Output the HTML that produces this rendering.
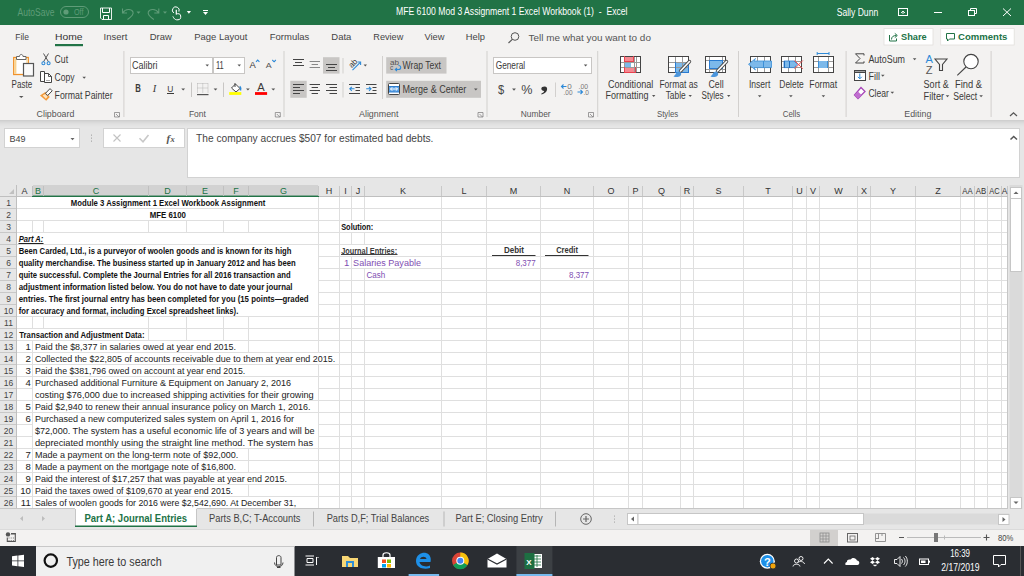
<!DOCTYPE html>
<html><head><meta charset="utf-8"><title>Excel</title>
<style>html,body{margin:0;padding:0;width:1024px;height:576px;overflow:hidden;background:#fff;font-family:"Liberation Sans",sans-serif}svg{display:block}</style>
</head><body><svg width="1024" height="576" viewBox="0 0 1024 576" font-family="Liberation Sans, sans-serif"><rect x="0" y="0" width="1024" height="25" fill="#217346" />
<text x="17.5" y="16" font-size="10" fill="#5f9c78" textLength="37" lengthAdjust="spacingAndGlyphs" >AutoSave</text>
<rect x="60.5" y="6.5" width="28" height="11" fill="none" stroke="#5f9c78" stroke-width="1" rx="5.5" />
<circle cx="66" cy="12" r="2.6" fill="#5f9c78"/>
<text x="74" y="15.2" font-size="8.5" fill="#5f9c78" textLength="9.5" lengthAdjust="spacingAndGlyphs" >Off</text>
<path d="M100.5 8 H111.5 V19.5 H102 L100.5 18 Z" fill="none" stroke="#e8f0ea" stroke-width="1" />
<path d="M102.5 8 V12.5 H109.5 V8" fill="none" stroke="#ffffff" stroke-width="1" />
<path d="M103.5 19.5 V15.5 H108.5 V19.5" fill="none" stroke="#ffffff" stroke-width="1" />
<path d="M122.5 8.5 V13 H127 M122.8 12.7 C125.5 8.5 131.5 8.5 133 12 C134 14.5 131 17 127.5 19.5" fill="none" stroke="#5f9c78" stroke-width="1.1" />
<path d="M136.5 11.5 H140.5 L138.5 13.8 Z" fill="#5f9c78" />
<path d="M158.8 8.5 V13 H154.3 M158.5 12.7 C155.8 8.5 149.8 8.5 148.3 12 C147.3 14.5 150.3 17 153.8 19.5" fill="none" stroke="#5f9c78" stroke-width="1.1" />
<path d="M163 11.5 H167 L165 13.8 Z" fill="#5f9c78" />
<path d="M173.8 13 A3.4 3.4 0 1 1 178.9 11.6" fill="none" stroke="#fff" stroke-width="1" />
<path d="M176.3 9.8 V14.6" fill="none" stroke="#fff" stroke-width="1.2" />
<path d="M176.3 14 C178 13.3 180.7 13.6 180.7 16 V17.5 C180.7 19.5 178.5 20 176.5 19.8 C175 19.6 174 18.5 173.4 17.4 L172.9 16.4" fill="none" stroke="#fff" stroke-width="1" />
<path d="M186.8 11 H191 L188.9 13.7 Z" fill="#fff" />
<rect x="203" y="10" width="5" height="1" fill="#fff"/>
<path d="M203 12 H208 L205.5 15 Z" fill="#fff" />
<text x="396" y="15" font-size="10" fill="#ffffff" textLength="231.5" lengthAdjust="spacingAndGlyphs" >MFE 6100 Mod 3 Assignment 1 Excel Workbook (1)  -  Excel</text>
<text x="836.7" y="16" font-size="10" fill="#ffffff" textLength="41.5" lengthAdjust="spacingAndGlyphs" >Sally Dunn</text>
<rect x="898.5" y="8.5" width="9" height="7" fill="none" stroke="#fff" stroke-width="1" />
<path d="M901 13 L903 11 L905 13 M903 11 V14" fill="none" stroke="#fff" stroke-width="0.9" />
<rect x="934" y="12" width="8" height="1" fill="#fff"/>
<rect x="968.5" y="10.5" width="6" height="5" fill="none" stroke="#fff" stroke-width="1" />
<path d="M970.5 10.5 V8.5 H976.5 V13.5 H974.5" fill="none" stroke="#fff" stroke-width="1" />
<path d="M1003 8.5 L1011 16 M1011 8.5 L1003 16" fill="none" stroke="#fff" stroke-width="1" />
<rect x="0" y="25" width="1024" height="95" fill="#f3f2f1" />
<text x="15.3" y="40.2" font-size="9.8" fill="#444444" textLength="13.7" lengthAdjust="spacingAndGlyphs" >File</text>
<text x="55" y="40.2" font-size="9.8" fill="#333333" textLength="27.5" lengthAdjust="spacingAndGlyphs" >Home</text>
<text x="103.5" y="40.2" font-size="9.8" fill="#444444" textLength="23.8" lengthAdjust="spacingAndGlyphs" >Insert</text>
<text x="149.8" y="40.2" font-size="9.8" fill="#444444" textLength="22" lengthAdjust="spacingAndGlyphs" >Draw</text>
<text x="194.3" y="40.2" font-size="9.8" fill="#444444" textLength="53" lengthAdjust="spacingAndGlyphs" >Page Layout</text>
<text x="269.8" y="40.2" font-size="9.8" fill="#444444" textLength="39.5" lengthAdjust="spacingAndGlyphs" >Formulas</text>
<text x="331.3" y="40.2" font-size="9.8" fill="#444444" textLength="20" lengthAdjust="spacingAndGlyphs" >Data</text>
<text x="373.3" y="40.2" font-size="9.8" fill="#444444" textLength="30" lengthAdjust="spacingAndGlyphs" >Review</text>
<text x="424.5" y="40.2" font-size="9.8" fill="#444444" textLength="20" lengthAdjust="spacingAndGlyphs" >View</text>
<text x="465.8" y="40.2" font-size="9.8" fill="#444444" textLength="19.2" lengthAdjust="spacingAndGlyphs" >Help</text>
<rect x="55" y="44" width="28" height="2.2" fill="#217346" />
<circle cx="515" cy="36.5" r="3.8" fill="none" stroke="#555" stroke-width="1"/>
<path d="M512.3 39.3 L508.5 43" fill="none" stroke="#555" stroke-width="1.1" />
<text x="528.6" y="40.5" font-size="9.5" fill="#555555" textLength="122.3" lengthAdjust="spacingAndGlyphs" >Tell me what you want to do</text>
<rect x="884" y="28.6" width="49" height="16.4" fill="#ffffff" stroke="#e1dfdd" stroke-width="0.8" />
<rect x="940.7" y="28.6" width="73.5" height="16.4" fill="#ffffff" stroke="#e1dfdd" stroke-width="0.8" />
<path d="M889.5 35 V41 H896.5 V38.5" fill="none" stroke="#217346" stroke-width="1" />
<path d="M891.5 39.5 C891.5 36.8 893.3 35.5 896.3 35.5 M894.8 33.4 L897.3 35.5 L894.8 37.6" fill="none" stroke="#217346" stroke-width="1" />
<text x="901" y="39.9" font-size="9.8" fill="#217346" font-weight="bold" textLength="25.6" lengthAdjust="spacingAndGlyphs" >Share</text>
<path d="M946.5 33.5 H954.5 V39 H949.5 L947.5 41 V39 H946.5 Z" fill="none" stroke="#217346" stroke-width="1" />
<text x="958.1" y="39.9" font-size="9.8" fill="#217346" font-weight="bold" textLength="49.3" lengthAdjust="spacingAndGlyphs" >Comments</text>
<rect x="123.4" y="51" width="1" height="66" fill="#d2d0ce"/>
<rect x="283.5" y="51" width="1" height="66" fill="#d2d0ce"/>
<rect x="486.5" y="51" width="1" height="66" fill="#d2d0ce"/>
<rect x="597.2" y="51" width="1" height="66" fill="#d2d0ce"/>
<rect x="738" y="51" width="1" height="66" fill="#d2d0ce"/>
<rect x="845.6" y="51" width="1" height="66" fill="#d2d0ce"/>
<rect x="990.6" y="51" width="1" height="66" fill="#d2d0ce"/>
<text x="11.6" y="88" font-size="10" fill="#3b3a39" textLength="20.5" lengthAdjust="spacingAndGlyphs" >Paste</text>
<path d="M19 96 H23.5 L21.25 98 Z" fill="#555" />
<text x="54.6" y="63" font-size="10" fill="#3b3a39" textLength="13.5" lengthAdjust="spacingAndGlyphs" >Cut</text>
<text x="54.6" y="81" font-size="10" fill="#3b3a39" textLength="20" lengthAdjust="spacingAndGlyphs" >Copy</text>
<path d="M82.4 76.8 H86 L84.2 78.8 Z" fill="#555" />
<text x="54.6" y="99" font-size="10" fill="#3b3a39" textLength="58" lengthAdjust="spacingAndGlyphs" >Format Painter</text>
<text x="36.6" y="116.5" font-size="9.3" fill="#555" textLength="37.7" lengthAdjust="spacingAndGlyphs" >Clipboard</text>
<rect x="130.5" y="57.5" width="82" height="16" fill="#ffffff" stroke="#c8c6c4" stroke-width="1" />
<rect x="213.5" y="57.5" width="31" height="16" fill="#ffffff" stroke="#c8c6c4" stroke-width="1" />
<text x="132" y="69" font-size="10" fill="#3b3a39" textLength="25.4" lengthAdjust="spacingAndGlyphs" >Calibri</text>
<path d="M205.5 64.5 H209 L207.25 66.5 Z" fill="#555" />
<text x="216" y="69" font-size="10" fill="#3b3a39" textLength="7.8" lengthAdjust="spacingAndGlyphs" >11</text>
<path d="M237.5 64.5 H241 L239.25 66.5 Z" fill="#555" />
<text x="188.9" y="116.5" font-size="9.3" fill="#555" textLength="17" lengthAdjust="spacingAndGlyphs" >Font</text>
<text x="356" y="116.5" font-size="9.5" fill="#444" ></text>
<text x="359" y="116.5" font-size="9.3" fill="#555" textLength="39.5" lengthAdjust="spacingAndGlyphs" >Alignment</text>
<text x="520.8" y="116.5" font-size="9.3" fill="#555" textLength="29.8" lengthAdjust="spacingAndGlyphs" >Number</text>
<text x="657" y="116.5" font-size="9.3" fill="#555" textLength="21.2" lengthAdjust="spacingAndGlyphs" >Styles</text>
<text x="782.8" y="116.5" font-size="9.3" fill="#555" textLength="17.5" lengthAdjust="spacingAndGlyphs" >Cells</text>
<text x="904.3" y="116.5" font-size="9.3" fill="#555" textLength="27" lengthAdjust="spacingAndGlyphs" >Editing</text>
<rect x="323" y="57.2" width="16.5" height="16.4" fill="#c8c6c4" />
<rect x="290.3" y="80.8" width="16.4" height="17" fill="#c8c6c4" />
<rect x="386.2" y="57.2" width="60.3" height="16.4" fill="#c8c6c4" />
<rect x="386.2" y="80.8" width="94.8" height="17" fill="#c8c6c4" />
<text x="402.6" y="69.2" font-size="10" fill="#3b3a39" textLength="38.4" lengthAdjust="spacingAndGlyphs" >Wrap Text</text>
<text x="402.6" y="92.5" font-size="10" fill="#3b3a39" textLength="63.6" lengthAdjust="spacingAndGlyphs" >Merge &amp; Center</text>
<path d="M474 88.5 H477.6 L475.8 90.5 Z" fill="#555" />
<rect x="493.5" y="57.5" width="98" height="16" fill="#ffffff" stroke="#c8c6c4" stroke-width="1" />
<text x="495.7" y="69" font-size="10" fill="#3b3a39" textLength="29.5" lengthAdjust="spacingAndGlyphs" >General</text>
<path d="M583.8 64.5 H587.4 L585.6 66.5 Z" fill="#555" />
<text x="607.9" y="87.8" font-size="10" fill="#3b3a39" textLength="45.4" lengthAdjust="spacingAndGlyphs" >Conditional</text>
<text x="605.5" y="99.4" font-size="10" fill="#3b3a39" textLength="43" lengthAdjust="spacingAndGlyphs" >Formatting</text>
<text x="659.4" y="87.8" font-size="10" fill="#3b3a39" textLength="38.4" lengthAdjust="spacingAndGlyphs" >Format as</text>
<text x="665.7" y="99.4" font-size="10" fill="#3b3a39" textLength="20" lengthAdjust="spacingAndGlyphs" >Table</text>
<text x="708.5" y="87.8" font-size="10" fill="#3b3a39" textLength="15.1" lengthAdjust="spacingAndGlyphs" >Cell</text>
<text x="701.6" y="99.4" font-size="10" fill="#3b3a39" textLength="22" lengthAdjust="spacingAndGlyphs" >Styles</text>
<path d="M652 95 H655.4 L653.7 97 Z" fill="#555" />
<path d="M688.5 95 H691.9 L690.2 97 Z" fill="#555" />
<path d="M727 95 H730.4 L728.7 97 Z" fill="#555" />
<text x="748.9" y="87.6" font-size="10" fill="#3b3a39" textLength="21.4" lengthAdjust="spacingAndGlyphs" >Insert</text>
<text x="779.3" y="87.6" font-size="10" fill="#3b3a39" textLength="24.4" lengthAdjust="spacingAndGlyphs" >Delete</text>
<text x="809.3" y="87.6" font-size="10" fill="#3b3a39" textLength="27.8" lengthAdjust="spacingAndGlyphs" >Format</text>
<path d="M757.9000000000001 95.2 H761.5 L759.7 97.2 Z" fill="#555" />
<path d="M789.1 95.2 H792.6999999999999 L790.9 97.2 Z" fill="#555" />
<path d="M821.6 95.2 H825.1999999999999 L823.4 97.2 Z" fill="#555" />
<text x="868.4" y="62.9" font-size="10" fill="#3b3a39" textLength="36.6" lengthAdjust="spacingAndGlyphs" >AutoSum</text>
<path d="M912.8 58.2 H916.4 L914.6 60.2 Z" fill="#555" />
<text x="868.4" y="80.2" font-size="10" fill="#3b3a39" textLength="11.5" lengthAdjust="spacingAndGlyphs" >Fill</text>
<path d="M881 74.8 H884.6 L882.8 76.8 Z" fill="#555" />
<text x="868.4" y="97.2" font-size="10" fill="#3b3a39" textLength="20.5" lengthAdjust="spacingAndGlyphs" >Clear</text>
<path d="M890.5 91.8 H894.1 L892.3 93.8 Z" fill="#555" />
<text x="923.6" y="88.2" font-size="10" fill="#3b3a39" textLength="25.1" lengthAdjust="spacingAndGlyphs" >Sort &amp;</text>
<text x="923.6" y="99.8" font-size="10" fill="#3b3a39" textLength="20.5" lengthAdjust="spacingAndGlyphs" >Filter</text>
<path d="M945.7 95.2 H949.3 L947.5 97.2 Z" fill="#555" />
<text x="955" y="88.2" font-size="10" fill="#3b3a39" textLength="27" lengthAdjust="spacingAndGlyphs" >Find &amp;</text>
<text x="953.2" y="99.8" font-size="10" fill="#3b3a39" textLength="24" lengthAdjust="spacingAndGlyphs" >Select</text>
<path d="M979.3 95.2 H982.9 L981.1 97.2 Z" fill="#555" />
<path d="M1010 116 L1013.5 112.7 L1017 116" fill="none" stroke="#555" stroke-width="1.2" />
<path d="M114.5 112.5 H119.5 V117 M114.5 112.5 V117 H119.5 M116.0 114 L119.0 117" fill="none" stroke="#777" stroke-width="0.7" />
<path d="M275.3 112.5 H280.3 V117 M275.3 112.5 V117 H280.3 M276.8 114 L279.8 117" fill="none" stroke="#777" stroke-width="0.7" />
<path d="M478 112.5 H483 V117 M478 112.5 V117 H483 M479.5 114 L482.5 117" fill="none" stroke="#777" stroke-width="0.7" />
<path d="M588.5 112.5 H593.5 V117 M588.5 112.5 V117 H593.5 M590.0 114 L593.0 117" fill="none" stroke="#777" stroke-width="0.7" />
<rect x="13.7" y="57.5" width="14.6" height="17" fill="#ffffff" stroke="#f0912a" stroke-width="1.3" />
<rect x="14.4" y="58.2" width="2" height="15.6" fill="#f9d38e" />
<rect x="26.2" y="58.2" width="1.4" height="5" fill="#f9e0ae" />
<path d="M16.5 59.5 V56.5 H19.5 C19.5 53.8 23 53.8 23 56.5 H26 V59.5 Z" fill="#ffffff" stroke="#666" stroke-width="1" />
<rect x="23.5" y="63.5" width="10" height="12.5" fill="#fafafa" stroke="#555" stroke-width="1.2" />
<path d="M43.5 53.5 L48.5 61.8 M48.5 53.5 L43.5 61.8" fill="none" stroke="#555" stroke-width="1" />
<circle cx="43.4" cy="63.3" r="1.5" fill="none" stroke="#2e8ad8" stroke-width="1.1"/>
<circle cx="48.6" cy="63.3" r="1.5" fill="none" stroke="#2e8ad8" stroke-width="1.1"/>
<rect x="40.5" y="71.5" width="4" height="10" fill="#ffffff" />
<path d="M44.5 81.5 H40.5 V71.5 H44.5" fill="none" stroke="#444" stroke-width="1" />
<path d="M44.5 71.5 V82.5 H51.5 V76.5 L48.5 73.5 H44.5" fill="#ffffff" stroke="#444" stroke-width="1" />
<path d="M48.5 73.5 V76.5 H51.5" fill="none" stroke="#444" stroke-width="0.9" />
<rect x="46" y="80" width="4" height="1" fill="#aaa"/>
<path d="M40 95.5 L45.3 92 L49.8 97 L46.2 100.8 Z" fill="#f39a3a" />
<path d="M42.6 95.6 L45.2 93.9 L47.7 96.8 L45.8 98.7 Z" fill="#fde3c0" />
<path d="M45.5 93.3 L50 88.6 L52.2 90.8 L47.7 95.5 Z" fill="#ffffff" stroke="#444" stroke-width="1" />
<text x="249.6" y="67.7" font-size="9" fill="#3b3a39" textLength="6.3" lengthAdjust="spacingAndGlyphs" >A</text>
<path d="M256 61.8 L257.7 60 L259.4 61.8" fill="none" stroke="#2e8ad8" stroke-width="1.1" />
<text x="265.8" y="67.7" font-size="8" fill="#555" textLength="5.9" lengthAdjust="spacingAndGlyphs" >A</text>
<path d="M272.3 60 L274.1 61.8 L275.8 60" fill="none" stroke="#2e8ad8" stroke-width="1.1" />
<text x="135.3" y="92.1" font-size="10" fill="#3b3a39" font-weight="bold" textLength="5.6" lengthAdjust="spacingAndGlyphs" >B</text>
<text x="152.8" y="92.1" font-size="9.5" fill="#3b3a39" font-family="Liberation Serif" font-style="italic" textLength="3.5" lengthAdjust="spacingAndGlyphs" >I</text>
<text x="167.3" y="91.6" font-size="9.5" fill="#3b3a39" textLength="6.1" lengthAdjust="spacingAndGlyphs" >U</text>
<rect x="167" y="93" width="7" height="1" fill="#3b3a39"/>
<path d="M181.3 88.5 H185.1 L183.2 90.6 Z" fill="#555" />
<rect x="191" y="82.5" width="1" height="14.5" fill="#c8c6c4"/>
<path d="M197.5 83.5 H208 M197.5 83.5 V92.5 M208 83.5 V92.5 M202.75 83.5 V92.5 M197.5 88 H208" fill="none" stroke="#aaa" stroke-width="0.8" stroke-dasharray="1 1"/>
<rect x="197" y="94" width="11.5" height="1.2" fill="#555"/>
<path d="M213.6 88.5 H217.4 L215.5 90.6 Z" fill="#555" />
<rect x="223" y="82.5" width="1" height="14.5" fill="#c8c6c4"/>
<path d="M231.5 88 L235.5 84 L240 88.5 L236 92 Z" fill="#ffffff" stroke="#444" stroke-width="1" />
<path d="M235 83 V87" fill="none" stroke="#444" stroke-width="1" />
<path d="M239.8 86.3 C241 87.5 241 89 240.5 90.5" fill="none" stroke="#2e8ad8" stroke-width="1.4" />
<rect x="229.2" y="92.1" width="12.1" height="2.8" fill="#ffff00" />
<path d="M246 88.5 H249.8 L247.9 90.6 Z" fill="#555" />
<text x="257.3" y="90.9" font-size="10" fill="#3b3a39" textLength="7.4" lengthAdjust="spacingAndGlyphs" >A</text>
<rect x="255" y="92.1" width="12.1" height="2.8" fill="#ff0000" />
<path d="M271.4 88.5 H275.2 L273.3 90.6 Z" fill="#555" />
<rect x="293" y="59" width="11" height="1" fill="#444"/>
<rect x="295" y="62" width="7" height="1" fill="#444"/>
<rect x="293" y="65" width="11" height="1" fill="#444"/>
<rect x="309.6" y="61" width="10.399999999999977" height="1" fill="#888"/>
<rect x="311.6" y="64" width="6.399999999999977" height="1" fill="#888"/>
<rect x="309.6" y="67" width="10.399999999999977" height="1" fill="#888"/>
<rect x="326" y="64" width="11" height="1" fill="#444"/>
<rect x="328" y="67" width="7" height="1" fill="#444"/>
<rect x="326" y="70" width="11" height="1" fill="#444"/>
<rect x="342.5" y="58" width="1" height="15.5" fill="#d2d0ce"/>
<text x="348" y="66.5" font-size="8" fill="#333" transform="rotate(-45 352 63)">ab</text>
<path d="M352.5 70.2 L360.3 62.3" fill="none" stroke="#2e8ad8" stroke-width="1.1" />
<path d="M357.5 62 H360.6 V65" fill="none" stroke="#2e8ad8" stroke-width="1.1" />
<path d="M363.6 64.6 H367 L365.3 66.6 Z" fill="#555" />
<rect x="382" y="56" width="1" height="43" fill="#d2d0ce"/>
<rect x="293" y="84" width="11" height="1" fill="#444"/>
<rect x="293" y="87" width="7" height="1" fill="#444"/>
<rect x="293" y="90" width="11" height="1" fill="#444"/>
<rect x="293" y="93" width="7" height="1" fill="#444"/>
<rect x="309.6" y="84" width="10.399999999999977" height="1" fill="#444"/>
<rect x="311.6" y="87" width="6.399999999999977" height="1" fill="#444"/>
<rect x="309.6" y="90" width="10.399999999999977" height="1" fill="#444"/>
<rect x="311.6" y="93" width="6.399999999999977" height="1" fill="#444"/>
<rect x="326" y="84" width="11" height="1" fill="#444"/>
<rect x="329.5" y="87" width="7.5" height="1" fill="#444"/>
<rect x="326" y="90" width="11" height="1" fill="#444"/>
<rect x="329.5" y="93" width="7.5" height="1" fill="#444"/>
<rect x="342.5" y="82" width="1" height="15.5" fill="#d2d0ce"/>
<rect x="349" y="84" width="11" height="1" fill="#444"/>
<rect x="355.5" y="87" width="4.5" height="1" fill="#444"/>
<rect x="355.5" y="90" width="4.5" height="1" fill="#444"/>
<rect x="349" y="93" width="11" height="1" fill="#444"/>
<path d="M354.5 88.8 H349.8 M351.8 86.8 L349.8 88.8 L351.8 90.8" fill="none" stroke="#2e8ad8" stroke-width="1.1" />
<rect x="366" y="84" width="10.5" height="1" fill="#444"/>
<rect x="372.5" y="87" width="4.0" height="1" fill="#444"/>
<rect x="372.5" y="90" width="4.0" height="1" fill="#444"/>
<rect x="366" y="93" width="10.5" height="1" fill="#444"/>
<path d="M366.2 88.8 H371 M369 86.8 L371 88.8 L369 90.8" fill="none" stroke="#2e8ad8" stroke-width="1.1" />
<text x="390" y="64.7" font-size="6.5" fill="#555" textLength="9" lengthAdjust="spacingAndGlyphs" >ab</text>
<text x="390" y="70.2" font-size="6.5" fill="#555" >c</text>
<path d="M398.5 65.5 C401.5 65.5 401.5 69.5 398.5 69.5 H395.5 M397 68 L395.3 69.5 L397 71" fill="none" stroke="#2e8ad8" stroke-width="1.1" />
<rect x="388.5" y="83.5" width="11" height="11" fill="#ffffff" stroke="#444" stroke-width="1" rx="1" />
<rect x="389" y="86" width="10" height="6" fill="#5aa0e4" />
<rect x="389" y="86" width="10" height="1" fill="#2f7fd0"/>
<rect x="389" y="91.5" width="10" height="1" fill="#2f7fd0"/>
<path d="M390.5 89 H397.5 M392.2 87.3 L390.5 89 L392.2 90.7 M395.8 87.3 L397.5 89 L395.8 90.7" fill="none" stroke="#ffffff" stroke-width="1" />
<text x="497.9" y="93.8" font-size="13" fill="#444" textLength="6.2" lengthAdjust="spacingAndGlyphs" >$</text>
<path d="M512.1 88.6 H515.9 L514 90.7 Z" fill="#555" />
<text x="521.2" y="94.2" font-size="13" fill="#444" textLength="11.2" lengthAdjust="spacingAndGlyphs" >%</text>
<path d="M544.5 86.5 C546.8 86.5 547.5 88.3 547 90 C546.5 92 544.5 93.5 541.5 94.5 L541.2 93.7 C543 93 544 92 544.2 91 C542.5 91 541.3 90 541.3 88.8 C541.3 87.3 542.8 86.5 544.5 86.5 Z" fill="#333" />
<rect x="555" y="82.5" width="1" height="14.5" fill="#d2d0ce"/>
<path d="M566.5 86.5 H561.5 M563.5 84.5 L561.5 86.5 L563.5 88.5" fill="none" stroke="#2e8ad8" stroke-width="1.1" />
<text x="567.3" y="89.3" font-size="7.5" fill="#777" textLength="4.5" lengthAdjust="spacingAndGlyphs" >0</text>
<text x="563.5" y="94.8" font-size="7.5" fill="#777" textLength="9" lengthAdjust="spacingAndGlyphs" >.00</text>
<text x="578.5" y="89.3" font-size="7.5" fill="#777" textLength="9.5" lengthAdjust="spacingAndGlyphs" >.00</text>
<path d="M577.5 92 H582.5 M580.5 90 L582.5 92 L580.5 94" fill="none" stroke="#2e8ad8" stroke-width="1.1" />
<text x="583.5" y="94.8" font-size="7.5" fill="#777" textLength="5.5" lengthAdjust="spacingAndGlyphs" >.0</text>
<rect x="620" y="56" width="21" height="17" fill="#ffffff" />
<rect x="624" y="56" width="10" height="6" fill="#f58a92" />
<rect x="624" y="67" width="11" height="6" fill="#f58a92" />
<rect x="624" y="62" width="7" height="5" fill="#7db9ea" />
<rect x="624" y="56" width="1" height="17" fill="#9a9a9a"/>
<rect x="634" y="56" width="1" height="17" fill="#9a9a9a"/>
<rect x="636" y="56" width="1" height="17" fill="#9a9a9a"/>
<rect x="620" y="62" width="21" height="1" fill="#9a9a9a"/>
<rect x="620" y="67" width="21" height="1" fill="#9a9a9a"/>
<rect x="620.5" y="56.5" width="20" height="16" fill="none" stroke="#444" stroke-width="1" />
<rect x="624" y="56" width="1" height="6" fill="#e8424f"/>
<rect x="633" y="56" width="1" height="6" fill="#e8424f"/>
<rect x="624" y="61" width="10" height="1" fill="#e8424f"/>
<rect x="624" y="67" width="1" height="6" fill="#e8424f"/>
<rect x="635" y="67" width="1" height="6" fill="#e8424f"/>
<rect x="624" y="72" width="12" height="1" fill="#e8424f"/>
<rect x="668" y="56" width="21" height="17" fill="#ffffff" />
<rect x="675" y="62" width="14" height="11" fill="#7db9ea" />
<rect x="675" y="56" width="1" height="17" fill="#9a9a9a"/>
<rect x="682" y="56" width="1" height="17" fill="#9a9a9a"/>
<rect x="668" y="62" width="21" height="1" fill="#9a9a9a"/>
<rect x="668" y="67" width="21" height="1" fill="#9a9a9a"/>
<rect x="668.5" y="56.5" width="20" height="16" fill="none" stroke="#444" stroke-width="1" />
<rect x="675" y="62" width="1" height="11" fill="#2a7bd0"/>
<rect x="675" y="72" width="14" height="1" fill="#2a7bd0"/>
<rect x="688" y="62" width="1" height="11" fill="#2a7bd0"/>
<path d="M689.5 61.5 L680.5 71" fill="none" stroke="#505050" stroke-width="3.4" stroke-linecap="round"/>
<path d="M689.5 61.5 L680.5 71" fill="none" stroke="#ffffff" stroke-width="1.6" stroke-linecap="round"/>
<path d="M679.5 71.5 C676.5 71.0 676.0 74.5 673.5 76.5 C677.5 78.0 682.0 76.5 681.0 73.0 Z" fill="#4c96dc" />
<rect x="705" y="56" width="21" height="17" fill="#ffffff" />
<rect x="709" y="56" width="1" height="17" fill="#9a9a9a"/>
<rect x="722" y="56" width="1" height="17" fill="#9a9a9a"/>
<rect x="705" y="60" width="21" height="1" fill="#9a9a9a"/>
<rect x="705" y="69" width="21" height="1" fill="#9a9a9a"/>
<rect x="705.5" y="56.5" width="20" height="16" fill="none" stroke="#444" stroke-width="1" />
<rect x="709.5" y="60.5" width="13" height="8" fill="#7db9ea" stroke="#2a7bd0" stroke-width="1" />
<path d="M726.5 61.5 L717.5 71" fill="none" stroke="#505050" stroke-width="3.4" stroke-linecap="round"/>
<path d="M726.5 61.5 L717.5 71" fill="none" stroke="#ffffff" stroke-width="1.6" stroke-linecap="round"/>
<path d="M716.5 71.5 C713.5 71.0 713.0 74.5 710.5 76.5 C714.5 78.0 719.0 76.5 718.0 73.0 Z" fill="#4c96dc" />
<rect x="750" y="56" width="21" height="17" fill="#ffffff" />
<rect x="757" y="56" width="1" height="17" fill="#9a9a9a"/>
<rect x="764" y="56" width="1" height="17" fill="#9a9a9a"/>
<rect x="750" y="61" width="21" height="1" fill="#9a9a9a"/>
<rect x="750" y="67" width="21" height="1" fill="#9a9a9a"/>
<rect x="750.5" y="56.5" width="20" height="16" fill="none" stroke="#444" stroke-width="1" />
<path d="M771.5 61 H754 L755.5 58.5 L748.5 64.3 L755.5 70 L754 67.6 H771.5 Z" fill="#7db9ea" stroke="#3b8fd8" stroke-width="0.8" />
<rect x="763" y="61" width="1" height="7" fill="#3b8fd8"/>
<rect x="781" y="56" width="21" height="17" fill="#ffffff" />
<rect x="788" y="56" width="1" height="17" fill="#9a9a9a"/>
<rect x="795" y="56" width="1" height="17" fill="#9a9a9a"/>
<rect x="781" y="61" width="21" height="1" fill="#9a9a9a"/>
<rect x="781" y="67" width="21" height="1" fill="#9a9a9a"/>
<rect x="781.5" y="56.5" width="20" height="16" fill="none" stroke="#444" stroke-width="1" />
<path d="M784 61 H794 L797.5 64.3 L794 67.6 H784 Z" fill="#7db9ea" stroke="#2f7fd0" stroke-width="0.8" />
<rect x="784" y="61" width="1" height="7" fill="#1f6fc0"/>
<rect x="789" y="61" width="1" height="7" fill="#1f6fc0"/>
<path d="M794.5 60.5 L802.8 68.8 M802.8 60.5 L794.5 68.8" fill="none" stroke="#f05050" stroke-width="1" />
<rect x="813" y="56" width="21" height="17" fill="#ffffff" />
<rect x="818" y="56" width="1" height="17" fill="#9a9a9a"/>
<rect x="828" y="56" width="1" height="17" fill="#9a9a9a"/>
<rect x="813" y="61" width="21" height="1" fill="#9a9a9a"/>
<rect x="813" y="67" width="21" height="1" fill="#9a9a9a"/>
<rect x="813.5" y="56.5" width="20" height="16" fill="none" stroke="#444" stroke-width="1" />
<rect x="818" y="61" width="10" height="7" fill="#7db9ea" />
<rect x="818" y="61" width="1" height="7" fill="#3b8fd8"/>
<rect x="827" y="61" width="1" height="7" fill="#3b8fd8"/>
<path d="M817.2 53.5 H829 M817.2 52 V55 M829 52 V55" fill="none" stroke="#2e8ad8" stroke-width="1" />
<path d="M864 55.5 V53.8 H855.5 L860 58.5 L855.5 63 H864 V61.3" fill="none" stroke="#444" stroke-width="1" />
<rect x="854.5" y="70.5" width="11" height="10" fill="#ffffff" stroke="#444" stroke-width="1" />
<rect x="854.5" y="71.5" width="11.0" height="1.5" fill="#444"/>
<path d="M859.8 73.5 V78.8 M857.8 76.8 L859.8 78.8 L861.8 76.8" fill="none" stroke="#2e8ad8" stroke-width="1" />
<path d="M861 87.5 L865 91.5 L858 98.5 L854.5 95 Z" fill="#ffffff" stroke="#a646b8" stroke-width="1.3" />
<path d="M854.5 95 L858 98.5 L861.5 95 L858 91.5 Z" fill="#c06fd0" />
<text x="925.6" y="62.8" font-size="11" fill="#2e8ad8" textLength="7.4" lengthAdjust="spacingAndGlyphs" >A</text>
<text x="925.8" y="74" font-size="11.5" fill="#555" textLength="6.8" lengthAdjust="spacingAndGlyphs" >Z</text>
<path d="M935 59 H947 L942.5 64.5 V70.5 H939.5 V64.5 Z" fill="none" stroke="#444" stroke-width="1.1" />
<circle cx="971" cy="61.6" r="7.2" fill="#ffffff" stroke="#444" stroke-width="1.1"/>
<path d="M957.3 75.3 L966 67" fill="none" stroke="#444" stroke-width="1.1" />
<rect x="0" y="120" width="1024" height="65" fill="#e6e6e6" />
<rect x="0" y="120" width="1024" height="1" fill="#cfcfcf"/>
<rect x="0" y="121" width="1024" height="1" fill="#d5d5d5"/>
<rect x="0" y="122" width="1024" height="1" fill="#dadada"/>
<rect x="0" y="123" width="1024" height="1" fill="#dedede"/>
<rect x="0" y="124" width="1024" height="1" fill="#e1e1e1"/>
<rect x="0" y="125" width="1024" height="1" fill="#e3e3e3"/>
<rect x="0" y="126" width="1024" height="1" fill="#e5e5e5"/>
<rect x="4.5" y="128.5" width="75" height="19" fill="#ffffff" stroke="#d2d2d2" stroke-width="1" />
<text x="9.4" y="142" font-size="9.5" fill="#444" textLength="16" lengthAdjust="spacingAndGlyphs" >B49</text>
<path d="M70.5 138 H74.5 L72.5 140.3 Z" fill="#666" />
<rect x="91" y="134.5" width="1" height="1.3" fill="#aaa" />
<rect x="91" y="137.5" width="1" height="1.3" fill="#aaa" />
<rect x="91" y="140.5" width="1" height="1.3" fill="#aaa" />
<rect x="103.5" y="128.5" width="81" height="19" fill="#ffffff" stroke="#d2d2d2" stroke-width="1" />
<path d="M113.5 134.5 L120.5 141.5 M120.5 134.5 L113.5 141.5" fill="none" stroke="#c2c2c2" stroke-width="1.1" />
<path d="M139.5 138.3 L143 141.8 L148.5 135" fill="none" stroke="#c8c8c8" stroke-width="1.6" />
<text x="166.5" y="142" font-size="11" fill="#555" font-family="Liberation Serif" font-weight="bold" font-style="italic" >f</text>
<text x="170.5" y="142.3" font-size="8.5" fill="#555" font-family="Liberation Serif" font-weight="bold" font-style="italic" >x</text>
<rect x="187.5" y="128.5" width="832" height="49" fill="#ffffff" stroke="#d2d2d2" stroke-width="1" />
<text x="196.1" y="142.3" font-size="10.5" fill="#444" textLength="237.3" lengthAdjust="spacingAndGlyphs" >The company accrues $507 for estimated bad debts.</text>
<path d="M1010.5 139.5 L1013.7 136.5 L1017 139.5" fill="none" stroke="#555" stroke-width="1.5" />
<rect x="0" y="185" width="1024" height="324" fill="#ffffff" />
<rect x="0" y="185" width="1008" height="11" fill="#e6e6e6" />
<rect x="33" y="185" width="285" height="11" fill="#d2d2d2" />
<rect x="0" y="196" width="1008" height="1" fill="#bfbfbf"/>
<rect x="32" y="196" width="287" height="1" fill="#217346"/>
<rect x="32" y="195" width="287" height="1" fill="#217346" opacity="0.45"/>
<rect x="0" y="197" width="16" height="312" fill="#e6e6e6" />
<rect x="16" y="185" width="1" height="324" fill="#bfbfbf"/>
<path d="M14 189 V194 H9 Z" fill="#c0c0c0" />
<rect x="32" y="186" width="1" height="10" fill="#c0c0c0"/>
<rect x="43" y="186" width="1" height="10" fill="#c0c0c0"/>
<rect x="148" y="186" width="1" height="10" fill="#c0c0c0"/>
<rect x="186" y="186" width="1" height="10" fill="#c0c0c0"/>
<rect x="223" y="186" width="1" height="10" fill="#c0c0c0"/>
<rect x="248" y="186" width="1" height="10" fill="#c0c0c0"/>
<rect x="318" y="186" width="1" height="10" fill="#c8c8c8"/>
<rect x="339" y="186" width="1" height="10" fill="#c8c8c8"/>
<rect x="351" y="186" width="1" height="10" fill="#c8c8c8"/>
<rect x="364" y="186" width="1" height="10" fill="#c8c8c8"/>
<rect x="441" y="186" width="1" height="10" fill="#c8c8c8"/>
<rect x="486" y="186" width="1" height="10" fill="#c8c8c8"/>
<rect x="540" y="186" width="1" height="10" fill="#c8c8c8"/>
<rect x="593" y="186" width="1" height="10" fill="#c8c8c8"/>
<rect x="628" y="186" width="1" height="10" fill="#c8c8c8"/>
<rect x="642" y="186" width="1" height="10" fill="#c8c8c8"/>
<rect x="680" y="186" width="1" height="10" fill="#c8c8c8"/>
<rect x="693" y="186" width="1" height="10" fill="#c8c8c8"/>
<rect x="743" y="186" width="1" height="10" fill="#c8c8c8"/>
<rect x="792" y="186" width="1" height="10" fill="#c8c8c8"/>
<rect x="806" y="186" width="1" height="10" fill="#c8c8c8"/>
<rect x="819" y="186" width="1" height="10" fill="#c8c8c8"/>
<rect x="857" y="186" width="1" height="10" fill="#c8c8c8"/>
<rect x="870" y="186" width="1" height="10" fill="#c8c8c8"/>
<rect x="915" y="186" width="1" height="10" fill="#c8c8c8"/>
<rect x="960" y="186" width="1" height="10" fill="#c8c8c8"/>
<rect x="974" y="186" width="1" height="10" fill="#c8c8c8"/>
<rect x="987" y="186" width="1" height="10" fill="#c0c0c0"/>
<rect x="1001" y="186" width="1" height="10" fill="#c8c8c8"/>
<rect x="1007" y="186" width="1" height="10" fill="#c8c8c8"/>
<text x="24.5" y="193.7" font-size="9" fill="#333" text-anchor="middle" >A</text>
<text x="38.0" y="193.7" font-size="9" fill="#217346" text-anchor="middle" >B</text>
<text x="96.0" y="193.7" font-size="9" fill="#217346" text-anchor="middle" >C</text>
<text x="167.5" y="193.7" font-size="9" fill="#217346" text-anchor="middle" >D</text>
<text x="205.0" y="193.7" font-size="9" fill="#217346" text-anchor="middle" >E</text>
<text x="236.0" y="193.7" font-size="9" fill="#217346" text-anchor="middle" >F</text>
<text x="283.5" y="193.7" font-size="9" fill="#217346" text-anchor="middle" >G</text>
<text x="329.0" y="193.7" font-size="9" fill="#333" text-anchor="middle" >H</text>
<text x="345.5" y="193.7" font-size="9" fill="#333" text-anchor="middle" >I</text>
<text x="358.0" y="193.7" font-size="9" fill="#333" text-anchor="middle" >J</text>
<text x="403.0" y="193.7" font-size="9" fill="#333" text-anchor="middle" >K</text>
<text x="464.0" y="193.7" font-size="9" fill="#333" text-anchor="middle" >L</text>
<text x="513.5" y="193.7" font-size="9" fill="#333" text-anchor="middle" >M</text>
<text x="567.0" y="193.7" font-size="9" fill="#333" text-anchor="middle" >N</text>
<text x="611.0" y="193.7" font-size="9" fill="#333" text-anchor="middle" >O</text>
<text x="635.5" y="193.7" font-size="9" fill="#333" text-anchor="middle" >P</text>
<text x="661.5" y="193.7" font-size="9" fill="#333" text-anchor="middle" >Q</text>
<text x="687.0" y="193.7" font-size="9" fill="#333" text-anchor="middle" >R</text>
<text x="718.5" y="193.7" font-size="9" fill="#333" text-anchor="middle" >S</text>
<text x="768.0" y="193.7" font-size="9" fill="#333" text-anchor="middle" >T</text>
<text x="799.5" y="193.7" font-size="9" fill="#333" text-anchor="middle" >U</text>
<text x="813.0" y="193.7" font-size="9" fill="#333" text-anchor="middle" >V</text>
<text x="838.5" y="193.7" font-size="9" fill="#333" text-anchor="middle" >W</text>
<text x="864.0" y="193.7" font-size="9" fill="#333" text-anchor="middle" >X</text>
<text x="893.0" y="193.7" font-size="9" fill="#333" text-anchor="middle" >Y</text>
<text x="938.0" y="193.7" font-size="9" fill="#333" text-anchor="middle" >Z</text>
<text x="967.5" y="193.7" font-size="9" fill="#333" text-anchor="middle" textLength="10.4" lengthAdjust="spacingAndGlyphs" >AA</text>
<text x="981.0" y="193.7" font-size="9" fill="#333" text-anchor="middle" textLength="10.4" lengthAdjust="spacingAndGlyphs" >AB</text>
<text x="994.5" y="193.7" font-size="9" fill="#333" text-anchor="middle" textLength="10.4" lengthAdjust="spacingAndGlyphs" >AC</text>
<text x="1001.7" y="193.7" font-size="9" fill="#333" textLength="5.6" lengthAdjust="spacingAndGlyphs" >A</text>
<text x="8.5" y="206" font-size="8.5" fill="#444" text-anchor="middle" >1</text>
<rect x="0" y="208" width="16" height="1" fill="#c8c8c8"/>
<text x="8.5" y="218" font-size="8.5" fill="#444" text-anchor="middle" >2</text>
<rect x="0" y="220" width="16" height="1" fill="#c8c8c8"/>
<text x="8.5" y="230" font-size="8.5" fill="#444" text-anchor="middle" >3</text>
<rect x="0" y="232" width="16" height="1" fill="#c8c8c8"/>
<text x="8.5" y="242" font-size="8.5" fill="#444" text-anchor="middle" >4</text>
<rect x="0" y="244" width="16" height="1" fill="#c8c8c8"/>
<text x="8.5" y="254" font-size="8.5" fill="#444" text-anchor="middle" >5</text>
<rect x="0" y="256" width="16" height="1" fill="#c8c8c8"/>
<text x="8.5" y="266" font-size="8.5" fill="#444" text-anchor="middle" >6</text>
<rect x="0" y="268" width="16" height="1" fill="#c8c8c8"/>
<text x="8.5" y="278" font-size="8.5" fill="#444" text-anchor="middle" >7</text>
<rect x="0" y="280" width="16" height="1" fill="#c8c8c8"/>
<text x="8.5" y="290" font-size="8.5" fill="#444" text-anchor="middle" >8</text>
<rect x="0" y="292" width="16" height="1" fill="#c8c8c8"/>
<text x="8.5" y="302" font-size="8.5" fill="#444" text-anchor="middle" >9</text>
<rect x="0" y="304" width="16" height="1" fill="#c8c8c8"/>
<text x="8.5" y="314" font-size="8.5" fill="#444" text-anchor="middle" >10</text>
<rect x="0" y="316" width="16" height="1" fill="#c8c8c8"/>
<text x="8.5" y="326" font-size="8.5" fill="#444" text-anchor="middle" >11</text>
<rect x="0" y="328" width="16" height="1" fill="#c8c8c8"/>
<text x="8.5" y="338" font-size="8.5" fill="#444" text-anchor="middle" >12</text>
<rect x="0" y="340" width="16" height="1" fill="#c8c8c8"/>
<text x="8.5" y="350" font-size="8.5" fill="#444" text-anchor="middle" >13</text>
<rect x="0" y="352" width="16" height="1" fill="#c8c8c8"/>
<text x="8.5" y="362" font-size="8.5" fill="#444" text-anchor="middle" >14</text>
<rect x="0" y="364" width="16" height="1" fill="#c8c8c8"/>
<text x="8.5" y="374" font-size="8.5" fill="#444" text-anchor="middle" >15</text>
<rect x="0" y="376" width="16" height="1" fill="#c8c8c8"/>
<text x="8.5" y="386" font-size="8.5" fill="#444" text-anchor="middle" >16</text>
<rect x="0" y="388" width="16" height="1" fill="#c8c8c8"/>
<text x="8.5" y="398" font-size="8.5" fill="#444" text-anchor="middle" >17</text>
<rect x="0" y="400" width="16" height="1" fill="#c8c8c8"/>
<text x="8.5" y="410" font-size="8.5" fill="#444" text-anchor="middle" >18</text>
<rect x="0" y="412" width="16" height="1" fill="#c8c8c8"/>
<text x="8.5" y="422" font-size="8.5" fill="#444" text-anchor="middle" >19</text>
<rect x="0" y="424" width="16" height="1" fill="#c8c8c8"/>
<text x="8.5" y="434" font-size="8.5" fill="#444" text-anchor="middle" >20</text>
<rect x="0" y="436" width="16" height="1" fill="#c8c8c8"/>
<text x="8.5" y="446" font-size="8.5" fill="#444" text-anchor="middle" >21</text>
<rect x="0" y="448" width="16" height="1" fill="#c8c8c8"/>
<text x="8.5" y="458" font-size="8.5" fill="#444" text-anchor="middle" >22</text>
<rect x="0" y="460" width="16" height="1" fill="#c8c8c8"/>
<text x="8.5" y="470" font-size="8.5" fill="#444" text-anchor="middle" >23</text>
<rect x="0" y="472" width="16" height="1" fill="#c8c8c8"/>
<text x="8.5" y="482" font-size="8.5" fill="#444" text-anchor="middle" >24</text>
<rect x="0" y="484" width="16" height="1" fill="#c8c8c8"/>
<text x="8.5" y="494" font-size="8.5" fill="#444" text-anchor="middle" >25</text>
<rect x="0" y="496" width="16" height="1" fill="#c8c8c8"/>
<text x="8.5" y="506" font-size="8.5" fill="#444" text-anchor="middle" >26</text>
<rect x="0" y="508" width="16" height="1" fill="#c8c8c8"/>
<rect x="17" y="208" width="991" height="1" fill="#dfdfdf"/>
<rect x="17" y="220" width="991" height="1" fill="#dfdfdf"/>
<rect x="17" y="232" width="991" height="1" fill="#dfdfdf"/>
<rect x="17" y="244" width="991" height="1" fill="#dfdfdf"/>
<rect x="17" y="256" width="15" height="1" fill="#dfdfdf"/>
<rect x="318" y="256" width="690" height="1" fill="#dfdfdf"/>
<rect x="17" y="268" width="15" height="1" fill="#dfdfdf"/>
<rect x="318" y="268" width="690" height="1" fill="#dfdfdf"/>
<rect x="17" y="280" width="15" height="1" fill="#dfdfdf"/>
<rect x="318" y="280" width="690" height="1" fill="#dfdfdf"/>
<rect x="17" y="292" width="15" height="1" fill="#dfdfdf"/>
<rect x="318" y="292" width="690" height="1" fill="#dfdfdf"/>
<rect x="17" y="304" width="15" height="1" fill="#dfdfdf"/>
<rect x="318" y="304" width="690" height="1" fill="#dfdfdf"/>
<rect x="17" y="316" width="991" height="1" fill="#dfdfdf"/>
<rect x="17" y="328" width="991" height="1" fill="#dfdfdf"/>
<rect x="17" y="340" width="991" height="1" fill="#dfdfdf"/>
<rect x="17" y="352" width="991" height="1" fill="#dfdfdf"/>
<rect x="17" y="364" width="991" height="1" fill="#dfdfdf"/>
<rect x="17" y="376" width="991" height="1" fill="#dfdfdf"/>
<rect x="17" y="388" width="15" height="1" fill="#dfdfdf"/>
<rect x="318" y="388" width="690" height="1" fill="#dfdfdf"/>
<rect x="17" y="400" width="991" height="1" fill="#dfdfdf"/>
<rect x="17" y="412" width="991" height="1" fill="#dfdfdf"/>
<rect x="17" y="424" width="15" height="1" fill="#dfdfdf"/>
<rect x="318" y="424" width="690" height="1" fill="#dfdfdf"/>
<rect x="17" y="436" width="15" height="1" fill="#dfdfdf"/>
<rect x="318" y="436" width="690" height="1" fill="#dfdfdf"/>
<rect x="17" y="448" width="991" height="1" fill="#dfdfdf"/>
<rect x="17" y="460" width="991" height="1" fill="#dfdfdf"/>
<rect x="17" y="472" width="991" height="1" fill="#dfdfdf"/>
<rect x="17" y="484" width="991" height="1" fill="#dfdfdf"/>
<rect x="17" y="496" width="991" height="1" fill="#dfdfdf"/>
<rect x="17" y="508" width="991" height="1" fill="#dfdfdf"/>
<rect x="17" y="256" width="16" height="1" fill="#ffffff"/>
<rect x="17" y="268" width="16" height="1" fill="#ffffff"/>
<rect x="17" y="280" width="16" height="1" fill="#ffffff"/>
<rect x="17" y="292" width="16" height="1" fill="#ffffff"/>
<rect x="17" y="304" width="16" height="1" fill="#ffffff"/>
<rect x="318" y="197" width="1" height="12" fill="#dfdfdf"/>
<rect x="339" y="197" width="1" height="12" fill="#dfdfdf"/>
<rect x="351" y="197" width="1" height="12" fill="#dfdfdf"/>
<rect x="364" y="197" width="1" height="12" fill="#dfdfdf"/>
<rect x="441" y="197" width="1" height="12" fill="#dfdfdf"/>
<rect x="486" y="197" width="1" height="12" fill="#dfdfdf"/>
<rect x="540" y="197" width="1" height="12" fill="#dfdfdf"/>
<rect x="593" y="197" width="1" height="12" fill="#dfdfdf"/>
<rect x="628" y="197" width="1" height="12" fill="#dfdfdf"/>
<rect x="642" y="197" width="1" height="12" fill="#dfdfdf"/>
<rect x="680" y="197" width="1" height="12" fill="#dfdfdf"/>
<rect x="693" y="197" width="1" height="12" fill="#dfdfdf"/>
<rect x="743" y="197" width="1" height="12" fill="#dfdfdf"/>
<rect x="792" y="197" width="1" height="12" fill="#dfdfdf"/>
<rect x="806" y="197" width="1" height="12" fill="#dfdfdf"/>
<rect x="819" y="197" width="1" height="12" fill="#dfdfdf"/>
<rect x="857" y="197" width="1" height="12" fill="#dfdfdf"/>
<rect x="870" y="197" width="1" height="12" fill="#dfdfdf"/>
<rect x="915" y="197" width="1" height="12" fill="#dfdfdf"/>
<rect x="960" y="197" width="1" height="12" fill="#dfdfdf"/>
<rect x="974" y="197" width="1" height="12" fill="#dfdfdf"/>
<rect x="987" y="197" width="1" height="12" fill="#dfdfdf"/>
<rect x="1001" y="197" width="1" height="12" fill="#dfdfdf"/>
<rect x="318" y="209" width="1" height="12" fill="#dfdfdf"/>
<rect x="339" y="209" width="1" height="12" fill="#dfdfdf"/>
<rect x="351" y="209" width="1" height="12" fill="#dfdfdf"/>
<rect x="364" y="209" width="1" height="12" fill="#dfdfdf"/>
<rect x="441" y="209" width="1" height="12" fill="#dfdfdf"/>
<rect x="486" y="209" width="1" height="12" fill="#dfdfdf"/>
<rect x="540" y="209" width="1" height="12" fill="#dfdfdf"/>
<rect x="593" y="209" width="1" height="12" fill="#dfdfdf"/>
<rect x="628" y="209" width="1" height="12" fill="#dfdfdf"/>
<rect x="642" y="209" width="1" height="12" fill="#dfdfdf"/>
<rect x="680" y="209" width="1" height="12" fill="#dfdfdf"/>
<rect x="693" y="209" width="1" height="12" fill="#dfdfdf"/>
<rect x="743" y="209" width="1" height="12" fill="#dfdfdf"/>
<rect x="792" y="209" width="1" height="12" fill="#dfdfdf"/>
<rect x="806" y="209" width="1" height="12" fill="#dfdfdf"/>
<rect x="819" y="209" width="1" height="12" fill="#dfdfdf"/>
<rect x="857" y="209" width="1" height="12" fill="#dfdfdf"/>
<rect x="870" y="209" width="1" height="12" fill="#dfdfdf"/>
<rect x="915" y="209" width="1" height="12" fill="#dfdfdf"/>
<rect x="960" y="209" width="1" height="12" fill="#dfdfdf"/>
<rect x="974" y="209" width="1" height="12" fill="#dfdfdf"/>
<rect x="987" y="209" width="1" height="12" fill="#dfdfdf"/>
<rect x="1001" y="209" width="1" height="12" fill="#dfdfdf"/>
<rect x="32" y="221" width="1" height="12" fill="#dfdfdf"/>
<rect x="43" y="221" width="1" height="12" fill="#dfdfdf"/>
<rect x="148" y="221" width="1" height="12" fill="#dfdfdf"/>
<rect x="186" y="221" width="1" height="12" fill="#dfdfdf"/>
<rect x="223" y="221" width="1" height="12" fill="#dfdfdf"/>
<rect x="248" y="221" width="1" height="12" fill="#dfdfdf"/>
<rect x="318" y="221" width="1" height="12" fill="#dfdfdf"/>
<rect x="339" y="221" width="1" height="12" fill="#dfdfdf"/>
<rect x="441" y="221" width="1" height="12" fill="#dfdfdf"/>
<rect x="486" y="221" width="1" height="12" fill="#dfdfdf"/>
<rect x="540" y="221" width="1" height="12" fill="#dfdfdf"/>
<rect x="593" y="221" width="1" height="12" fill="#dfdfdf"/>
<rect x="628" y="221" width="1" height="12" fill="#dfdfdf"/>
<rect x="642" y="221" width="1" height="12" fill="#dfdfdf"/>
<rect x="680" y="221" width="1" height="12" fill="#dfdfdf"/>
<rect x="693" y="221" width="1" height="12" fill="#dfdfdf"/>
<rect x="743" y="221" width="1" height="12" fill="#dfdfdf"/>
<rect x="792" y="221" width="1" height="12" fill="#dfdfdf"/>
<rect x="806" y="221" width="1" height="12" fill="#dfdfdf"/>
<rect x="819" y="221" width="1" height="12" fill="#dfdfdf"/>
<rect x="857" y="221" width="1" height="12" fill="#dfdfdf"/>
<rect x="870" y="221" width="1" height="12" fill="#dfdfdf"/>
<rect x="915" y="221" width="1" height="12" fill="#dfdfdf"/>
<rect x="960" y="221" width="1" height="12" fill="#dfdfdf"/>
<rect x="974" y="221" width="1" height="12" fill="#dfdfdf"/>
<rect x="987" y="221" width="1" height="12" fill="#dfdfdf"/>
<rect x="1001" y="221" width="1" height="12" fill="#dfdfdf"/>
<rect x="318" y="233" width="1" height="12" fill="#dfdfdf"/>
<rect x="339" y="233" width="1" height="12" fill="#dfdfdf"/>
<rect x="351" y="233" width="1" height="12" fill="#dfdfdf"/>
<rect x="364" y="233" width="1" height="12" fill="#dfdfdf"/>
<rect x="441" y="233" width="1" height="12" fill="#dfdfdf"/>
<rect x="486" y="233" width="1" height="12" fill="#dfdfdf"/>
<rect x="540" y="233" width="1" height="12" fill="#dfdfdf"/>
<rect x="593" y="233" width="1" height="12" fill="#dfdfdf"/>
<rect x="628" y="233" width="1" height="12" fill="#dfdfdf"/>
<rect x="642" y="233" width="1" height="12" fill="#dfdfdf"/>
<rect x="680" y="233" width="1" height="12" fill="#dfdfdf"/>
<rect x="693" y="233" width="1" height="12" fill="#dfdfdf"/>
<rect x="743" y="233" width="1" height="12" fill="#dfdfdf"/>
<rect x="792" y="233" width="1" height="12" fill="#dfdfdf"/>
<rect x="806" y="233" width="1" height="12" fill="#dfdfdf"/>
<rect x="819" y="233" width="1" height="12" fill="#dfdfdf"/>
<rect x="857" y="233" width="1" height="12" fill="#dfdfdf"/>
<rect x="870" y="233" width="1" height="12" fill="#dfdfdf"/>
<rect x="915" y="233" width="1" height="12" fill="#dfdfdf"/>
<rect x="960" y="233" width="1" height="12" fill="#dfdfdf"/>
<rect x="974" y="233" width="1" height="12" fill="#dfdfdf"/>
<rect x="987" y="233" width="1" height="12" fill="#dfdfdf"/>
<rect x="1001" y="233" width="1" height="12" fill="#dfdfdf"/>
<rect x="318" y="245" width="1" height="12" fill="#dfdfdf"/>
<rect x="339" y="245" width="1" height="12" fill="#dfdfdf"/>
<rect x="441" y="245" width="1" height="12" fill="#dfdfdf"/>
<rect x="486" y="245" width="1" height="12" fill="#dfdfdf"/>
<rect x="540" y="245" width="1" height="12" fill="#dfdfdf"/>
<rect x="593" y="245" width="1" height="12" fill="#dfdfdf"/>
<rect x="628" y="245" width="1" height="12" fill="#dfdfdf"/>
<rect x="642" y="245" width="1" height="12" fill="#dfdfdf"/>
<rect x="680" y="245" width="1" height="12" fill="#dfdfdf"/>
<rect x="693" y="245" width="1" height="12" fill="#dfdfdf"/>
<rect x="743" y="245" width="1" height="12" fill="#dfdfdf"/>
<rect x="792" y="245" width="1" height="12" fill="#dfdfdf"/>
<rect x="806" y="245" width="1" height="12" fill="#dfdfdf"/>
<rect x="819" y="245" width="1" height="12" fill="#dfdfdf"/>
<rect x="857" y="245" width="1" height="12" fill="#dfdfdf"/>
<rect x="870" y="245" width="1" height="12" fill="#dfdfdf"/>
<rect x="915" y="245" width="1" height="12" fill="#dfdfdf"/>
<rect x="960" y="245" width="1" height="12" fill="#dfdfdf"/>
<rect x="974" y="245" width="1" height="12" fill="#dfdfdf"/>
<rect x="987" y="245" width="1" height="12" fill="#dfdfdf"/>
<rect x="1001" y="245" width="1" height="12" fill="#dfdfdf"/>
<rect x="318" y="257" width="1" height="12" fill="#dfdfdf"/>
<rect x="339" y="257" width="1" height="12" fill="#dfdfdf"/>
<rect x="351" y="257" width="1" height="12" fill="#dfdfdf"/>
<rect x="441" y="257" width="1" height="12" fill="#dfdfdf"/>
<rect x="486" y="257" width="1" height="12" fill="#dfdfdf"/>
<rect x="540" y="257" width="1" height="12" fill="#dfdfdf"/>
<rect x="593" y="257" width="1" height="12" fill="#dfdfdf"/>
<rect x="628" y="257" width="1" height="12" fill="#dfdfdf"/>
<rect x="642" y="257" width="1" height="12" fill="#dfdfdf"/>
<rect x="680" y="257" width="1" height="12" fill="#dfdfdf"/>
<rect x="693" y="257" width="1" height="12" fill="#dfdfdf"/>
<rect x="743" y="257" width="1" height="12" fill="#dfdfdf"/>
<rect x="792" y="257" width="1" height="12" fill="#dfdfdf"/>
<rect x="806" y="257" width="1" height="12" fill="#dfdfdf"/>
<rect x="819" y="257" width="1" height="12" fill="#dfdfdf"/>
<rect x="857" y="257" width="1" height="12" fill="#dfdfdf"/>
<rect x="870" y="257" width="1" height="12" fill="#dfdfdf"/>
<rect x="915" y="257" width="1" height="12" fill="#dfdfdf"/>
<rect x="960" y="257" width="1" height="12" fill="#dfdfdf"/>
<rect x="974" y="257" width="1" height="12" fill="#dfdfdf"/>
<rect x="987" y="257" width="1" height="12" fill="#dfdfdf"/>
<rect x="1001" y="257" width="1" height="12" fill="#dfdfdf"/>
<rect x="318" y="269" width="1" height="12" fill="#dfdfdf"/>
<rect x="339" y="269" width="1" height="12" fill="#dfdfdf"/>
<rect x="351" y="269" width="1" height="12" fill="#dfdfdf"/>
<rect x="364" y="269" width="1" height="12" fill="#dfdfdf"/>
<rect x="441" y="269" width="1" height="12" fill="#dfdfdf"/>
<rect x="486" y="269" width="1" height="12" fill="#dfdfdf"/>
<rect x="540" y="269" width="1" height="12" fill="#dfdfdf"/>
<rect x="593" y="269" width="1" height="12" fill="#dfdfdf"/>
<rect x="628" y="269" width="1" height="12" fill="#dfdfdf"/>
<rect x="642" y="269" width="1" height="12" fill="#dfdfdf"/>
<rect x="680" y="269" width="1" height="12" fill="#dfdfdf"/>
<rect x="693" y="269" width="1" height="12" fill="#dfdfdf"/>
<rect x="743" y="269" width="1" height="12" fill="#dfdfdf"/>
<rect x="792" y="269" width="1" height="12" fill="#dfdfdf"/>
<rect x="806" y="269" width="1" height="12" fill="#dfdfdf"/>
<rect x="819" y="269" width="1" height="12" fill="#dfdfdf"/>
<rect x="857" y="269" width="1" height="12" fill="#dfdfdf"/>
<rect x="870" y="269" width="1" height="12" fill="#dfdfdf"/>
<rect x="915" y="269" width="1" height="12" fill="#dfdfdf"/>
<rect x="960" y="269" width="1" height="12" fill="#dfdfdf"/>
<rect x="974" y="269" width="1" height="12" fill="#dfdfdf"/>
<rect x="987" y="269" width="1" height="12" fill="#dfdfdf"/>
<rect x="1001" y="269" width="1" height="12" fill="#dfdfdf"/>
<rect x="318" y="281" width="1" height="12" fill="#dfdfdf"/>
<rect x="339" y="281" width="1" height="12" fill="#dfdfdf"/>
<rect x="351" y="281" width="1" height="12" fill="#dfdfdf"/>
<rect x="364" y="281" width="1" height="12" fill="#dfdfdf"/>
<rect x="441" y="281" width="1" height="12" fill="#dfdfdf"/>
<rect x="486" y="281" width="1" height="12" fill="#dfdfdf"/>
<rect x="540" y="281" width="1" height="12" fill="#dfdfdf"/>
<rect x="593" y="281" width="1" height="12" fill="#dfdfdf"/>
<rect x="628" y="281" width="1" height="12" fill="#dfdfdf"/>
<rect x="642" y="281" width="1" height="12" fill="#dfdfdf"/>
<rect x="680" y="281" width="1" height="12" fill="#dfdfdf"/>
<rect x="693" y="281" width="1" height="12" fill="#dfdfdf"/>
<rect x="743" y="281" width="1" height="12" fill="#dfdfdf"/>
<rect x="792" y="281" width="1" height="12" fill="#dfdfdf"/>
<rect x="806" y="281" width="1" height="12" fill="#dfdfdf"/>
<rect x="819" y="281" width="1" height="12" fill="#dfdfdf"/>
<rect x="857" y="281" width="1" height="12" fill="#dfdfdf"/>
<rect x="870" y="281" width="1" height="12" fill="#dfdfdf"/>
<rect x="915" y="281" width="1" height="12" fill="#dfdfdf"/>
<rect x="960" y="281" width="1" height="12" fill="#dfdfdf"/>
<rect x="974" y="281" width="1" height="12" fill="#dfdfdf"/>
<rect x="987" y="281" width="1" height="12" fill="#dfdfdf"/>
<rect x="1001" y="281" width="1" height="12" fill="#dfdfdf"/>
<rect x="318" y="293" width="1" height="12" fill="#dfdfdf"/>
<rect x="339" y="293" width="1" height="12" fill="#dfdfdf"/>
<rect x="351" y="293" width="1" height="12" fill="#dfdfdf"/>
<rect x="364" y="293" width="1" height="12" fill="#dfdfdf"/>
<rect x="441" y="293" width="1" height="12" fill="#dfdfdf"/>
<rect x="486" y="293" width="1" height="12" fill="#dfdfdf"/>
<rect x="540" y="293" width="1" height="12" fill="#dfdfdf"/>
<rect x="593" y="293" width="1" height="12" fill="#dfdfdf"/>
<rect x="628" y="293" width="1" height="12" fill="#dfdfdf"/>
<rect x="642" y="293" width="1" height="12" fill="#dfdfdf"/>
<rect x="680" y="293" width="1" height="12" fill="#dfdfdf"/>
<rect x="693" y="293" width="1" height="12" fill="#dfdfdf"/>
<rect x="743" y="293" width="1" height="12" fill="#dfdfdf"/>
<rect x="792" y="293" width="1" height="12" fill="#dfdfdf"/>
<rect x="806" y="293" width="1" height="12" fill="#dfdfdf"/>
<rect x="819" y="293" width="1" height="12" fill="#dfdfdf"/>
<rect x="857" y="293" width="1" height="12" fill="#dfdfdf"/>
<rect x="870" y="293" width="1" height="12" fill="#dfdfdf"/>
<rect x="915" y="293" width="1" height="12" fill="#dfdfdf"/>
<rect x="960" y="293" width="1" height="12" fill="#dfdfdf"/>
<rect x="974" y="293" width="1" height="12" fill="#dfdfdf"/>
<rect x="987" y="293" width="1" height="12" fill="#dfdfdf"/>
<rect x="1001" y="293" width="1" height="12" fill="#dfdfdf"/>
<rect x="318" y="305" width="1" height="12" fill="#dfdfdf"/>
<rect x="339" y="305" width="1" height="12" fill="#dfdfdf"/>
<rect x="351" y="305" width="1" height="12" fill="#dfdfdf"/>
<rect x="364" y="305" width="1" height="12" fill="#dfdfdf"/>
<rect x="441" y="305" width="1" height="12" fill="#dfdfdf"/>
<rect x="486" y="305" width="1" height="12" fill="#dfdfdf"/>
<rect x="540" y="305" width="1" height="12" fill="#dfdfdf"/>
<rect x="593" y="305" width="1" height="12" fill="#dfdfdf"/>
<rect x="628" y="305" width="1" height="12" fill="#dfdfdf"/>
<rect x="642" y="305" width="1" height="12" fill="#dfdfdf"/>
<rect x="680" y="305" width="1" height="12" fill="#dfdfdf"/>
<rect x="693" y="305" width="1" height="12" fill="#dfdfdf"/>
<rect x="743" y="305" width="1" height="12" fill="#dfdfdf"/>
<rect x="792" y="305" width="1" height="12" fill="#dfdfdf"/>
<rect x="806" y="305" width="1" height="12" fill="#dfdfdf"/>
<rect x="819" y="305" width="1" height="12" fill="#dfdfdf"/>
<rect x="857" y="305" width="1" height="12" fill="#dfdfdf"/>
<rect x="870" y="305" width="1" height="12" fill="#dfdfdf"/>
<rect x="915" y="305" width="1" height="12" fill="#dfdfdf"/>
<rect x="960" y="305" width="1" height="12" fill="#dfdfdf"/>
<rect x="974" y="305" width="1" height="12" fill="#dfdfdf"/>
<rect x="987" y="305" width="1" height="12" fill="#dfdfdf"/>
<rect x="1001" y="305" width="1" height="12" fill="#dfdfdf"/>
<rect x="32" y="317" width="1" height="12" fill="#dfdfdf"/>
<rect x="43" y="317" width="1" height="12" fill="#dfdfdf"/>
<rect x="148" y="317" width="1" height="12" fill="#dfdfdf"/>
<rect x="186" y="317" width="1" height="12" fill="#dfdfdf"/>
<rect x="223" y="317" width="1" height="12" fill="#dfdfdf"/>
<rect x="248" y="317" width="1" height="12" fill="#dfdfdf"/>
<rect x="318" y="317" width="1" height="12" fill="#dfdfdf"/>
<rect x="339" y="317" width="1" height="12" fill="#dfdfdf"/>
<rect x="351" y="317" width="1" height="12" fill="#dfdfdf"/>
<rect x="364" y="317" width="1" height="12" fill="#dfdfdf"/>
<rect x="441" y="317" width="1" height="12" fill="#dfdfdf"/>
<rect x="486" y="317" width="1" height="12" fill="#dfdfdf"/>
<rect x="540" y="317" width="1" height="12" fill="#dfdfdf"/>
<rect x="593" y="317" width="1" height="12" fill="#dfdfdf"/>
<rect x="628" y="317" width="1" height="12" fill="#dfdfdf"/>
<rect x="642" y="317" width="1" height="12" fill="#dfdfdf"/>
<rect x="680" y="317" width="1" height="12" fill="#dfdfdf"/>
<rect x="693" y="317" width="1" height="12" fill="#dfdfdf"/>
<rect x="743" y="317" width="1" height="12" fill="#dfdfdf"/>
<rect x="792" y="317" width="1" height="12" fill="#dfdfdf"/>
<rect x="806" y="317" width="1" height="12" fill="#dfdfdf"/>
<rect x="819" y="317" width="1" height="12" fill="#dfdfdf"/>
<rect x="857" y="317" width="1" height="12" fill="#dfdfdf"/>
<rect x="870" y="317" width="1" height="12" fill="#dfdfdf"/>
<rect x="915" y="317" width="1" height="12" fill="#dfdfdf"/>
<rect x="960" y="317" width="1" height="12" fill="#dfdfdf"/>
<rect x="974" y="317" width="1" height="12" fill="#dfdfdf"/>
<rect x="987" y="317" width="1" height="12" fill="#dfdfdf"/>
<rect x="1001" y="317" width="1" height="12" fill="#dfdfdf"/>
<rect x="148" y="329" width="1" height="12" fill="#dfdfdf"/>
<rect x="186" y="329" width="1" height="12" fill="#dfdfdf"/>
<rect x="223" y="329" width="1" height="12" fill="#dfdfdf"/>
<rect x="248" y="329" width="1" height="12" fill="#dfdfdf"/>
<rect x="318" y="329" width="1" height="12" fill="#dfdfdf"/>
<rect x="339" y="329" width="1" height="12" fill="#dfdfdf"/>
<rect x="351" y="329" width="1" height="12" fill="#dfdfdf"/>
<rect x="364" y="329" width="1" height="12" fill="#dfdfdf"/>
<rect x="441" y="329" width="1" height="12" fill="#dfdfdf"/>
<rect x="486" y="329" width="1" height="12" fill="#dfdfdf"/>
<rect x="540" y="329" width="1" height="12" fill="#dfdfdf"/>
<rect x="593" y="329" width="1" height="12" fill="#dfdfdf"/>
<rect x="628" y="329" width="1" height="12" fill="#dfdfdf"/>
<rect x="642" y="329" width="1" height="12" fill="#dfdfdf"/>
<rect x="680" y="329" width="1" height="12" fill="#dfdfdf"/>
<rect x="693" y="329" width="1" height="12" fill="#dfdfdf"/>
<rect x="743" y="329" width="1" height="12" fill="#dfdfdf"/>
<rect x="792" y="329" width="1" height="12" fill="#dfdfdf"/>
<rect x="806" y="329" width="1" height="12" fill="#dfdfdf"/>
<rect x="819" y="329" width="1" height="12" fill="#dfdfdf"/>
<rect x="857" y="329" width="1" height="12" fill="#dfdfdf"/>
<rect x="870" y="329" width="1" height="12" fill="#dfdfdf"/>
<rect x="915" y="329" width="1" height="12" fill="#dfdfdf"/>
<rect x="960" y="329" width="1" height="12" fill="#dfdfdf"/>
<rect x="974" y="329" width="1" height="12" fill="#dfdfdf"/>
<rect x="987" y="329" width="1" height="12" fill="#dfdfdf"/>
<rect x="1001" y="329" width="1" height="12" fill="#dfdfdf"/>
<rect x="32" y="341" width="1" height="12" fill="#dfdfdf"/>
<rect x="248" y="341" width="1" height="12" fill="#dfdfdf"/>
<rect x="318" y="341" width="1" height="12" fill="#dfdfdf"/>
<rect x="339" y="341" width="1" height="12" fill="#dfdfdf"/>
<rect x="351" y="341" width="1" height="12" fill="#dfdfdf"/>
<rect x="364" y="341" width="1" height="12" fill="#dfdfdf"/>
<rect x="441" y="341" width="1" height="12" fill="#dfdfdf"/>
<rect x="486" y="341" width="1" height="12" fill="#dfdfdf"/>
<rect x="540" y="341" width="1" height="12" fill="#dfdfdf"/>
<rect x="593" y="341" width="1" height="12" fill="#dfdfdf"/>
<rect x="628" y="341" width="1" height="12" fill="#dfdfdf"/>
<rect x="642" y="341" width="1" height="12" fill="#dfdfdf"/>
<rect x="680" y="341" width="1" height="12" fill="#dfdfdf"/>
<rect x="693" y="341" width="1" height="12" fill="#dfdfdf"/>
<rect x="743" y="341" width="1" height="12" fill="#dfdfdf"/>
<rect x="792" y="341" width="1" height="12" fill="#dfdfdf"/>
<rect x="806" y="341" width="1" height="12" fill="#dfdfdf"/>
<rect x="819" y="341" width="1" height="12" fill="#dfdfdf"/>
<rect x="857" y="341" width="1" height="12" fill="#dfdfdf"/>
<rect x="870" y="341" width="1" height="12" fill="#dfdfdf"/>
<rect x="915" y="341" width="1" height="12" fill="#dfdfdf"/>
<rect x="960" y="341" width="1" height="12" fill="#dfdfdf"/>
<rect x="974" y="341" width="1" height="12" fill="#dfdfdf"/>
<rect x="987" y="341" width="1" height="12" fill="#dfdfdf"/>
<rect x="1001" y="341" width="1" height="12" fill="#dfdfdf"/>
<rect x="32" y="353" width="1" height="12" fill="#dfdfdf"/>
<rect x="339" y="353" width="1" height="12" fill="#dfdfdf"/>
<rect x="351" y="353" width="1" height="12" fill="#dfdfdf"/>
<rect x="364" y="353" width="1" height="12" fill="#dfdfdf"/>
<rect x="441" y="353" width="1" height="12" fill="#dfdfdf"/>
<rect x="486" y="353" width="1" height="12" fill="#dfdfdf"/>
<rect x="540" y="353" width="1" height="12" fill="#dfdfdf"/>
<rect x="593" y="353" width="1" height="12" fill="#dfdfdf"/>
<rect x="628" y="353" width="1" height="12" fill="#dfdfdf"/>
<rect x="642" y="353" width="1" height="12" fill="#dfdfdf"/>
<rect x="680" y="353" width="1" height="12" fill="#dfdfdf"/>
<rect x="693" y="353" width="1" height="12" fill="#dfdfdf"/>
<rect x="743" y="353" width="1" height="12" fill="#dfdfdf"/>
<rect x="792" y="353" width="1" height="12" fill="#dfdfdf"/>
<rect x="806" y="353" width="1" height="12" fill="#dfdfdf"/>
<rect x="819" y="353" width="1" height="12" fill="#dfdfdf"/>
<rect x="857" y="353" width="1" height="12" fill="#dfdfdf"/>
<rect x="870" y="353" width="1" height="12" fill="#dfdfdf"/>
<rect x="915" y="353" width="1" height="12" fill="#dfdfdf"/>
<rect x="960" y="353" width="1" height="12" fill="#dfdfdf"/>
<rect x="974" y="353" width="1" height="12" fill="#dfdfdf"/>
<rect x="987" y="353" width="1" height="12" fill="#dfdfdf"/>
<rect x="1001" y="353" width="1" height="12" fill="#dfdfdf"/>
<rect x="32" y="365" width="1" height="12" fill="#dfdfdf"/>
<rect x="318" y="365" width="1" height="12" fill="#dfdfdf"/>
<rect x="339" y="365" width="1" height="12" fill="#dfdfdf"/>
<rect x="351" y="365" width="1" height="12" fill="#dfdfdf"/>
<rect x="364" y="365" width="1" height="12" fill="#dfdfdf"/>
<rect x="441" y="365" width="1" height="12" fill="#dfdfdf"/>
<rect x="486" y="365" width="1" height="12" fill="#dfdfdf"/>
<rect x="540" y="365" width="1" height="12" fill="#dfdfdf"/>
<rect x="593" y="365" width="1" height="12" fill="#dfdfdf"/>
<rect x="628" y="365" width="1" height="12" fill="#dfdfdf"/>
<rect x="642" y="365" width="1" height="12" fill="#dfdfdf"/>
<rect x="680" y="365" width="1" height="12" fill="#dfdfdf"/>
<rect x="693" y="365" width="1" height="12" fill="#dfdfdf"/>
<rect x="743" y="365" width="1" height="12" fill="#dfdfdf"/>
<rect x="792" y="365" width="1" height="12" fill="#dfdfdf"/>
<rect x="806" y="365" width="1" height="12" fill="#dfdfdf"/>
<rect x="819" y="365" width="1" height="12" fill="#dfdfdf"/>
<rect x="857" y="365" width="1" height="12" fill="#dfdfdf"/>
<rect x="870" y="365" width="1" height="12" fill="#dfdfdf"/>
<rect x="915" y="365" width="1" height="12" fill="#dfdfdf"/>
<rect x="960" y="365" width="1" height="12" fill="#dfdfdf"/>
<rect x="974" y="365" width="1" height="12" fill="#dfdfdf"/>
<rect x="987" y="365" width="1" height="12" fill="#dfdfdf"/>
<rect x="1001" y="365" width="1" height="12" fill="#dfdfdf"/>
<rect x="32" y="377" width="1" height="12" fill="#dfdfdf"/>
<rect x="318" y="377" width="1" height="12" fill="#dfdfdf"/>
<rect x="339" y="377" width="1" height="12" fill="#dfdfdf"/>
<rect x="351" y="377" width="1" height="12" fill="#dfdfdf"/>
<rect x="364" y="377" width="1" height="12" fill="#dfdfdf"/>
<rect x="441" y="377" width="1" height="12" fill="#dfdfdf"/>
<rect x="486" y="377" width="1" height="12" fill="#dfdfdf"/>
<rect x="540" y="377" width="1" height="12" fill="#dfdfdf"/>
<rect x="593" y="377" width="1" height="12" fill="#dfdfdf"/>
<rect x="628" y="377" width="1" height="12" fill="#dfdfdf"/>
<rect x="642" y="377" width="1" height="12" fill="#dfdfdf"/>
<rect x="680" y="377" width="1" height="12" fill="#dfdfdf"/>
<rect x="693" y="377" width="1" height="12" fill="#dfdfdf"/>
<rect x="743" y="377" width="1" height="12" fill="#dfdfdf"/>
<rect x="792" y="377" width="1" height="12" fill="#dfdfdf"/>
<rect x="806" y="377" width="1" height="12" fill="#dfdfdf"/>
<rect x="819" y="377" width="1" height="12" fill="#dfdfdf"/>
<rect x="857" y="377" width="1" height="12" fill="#dfdfdf"/>
<rect x="870" y="377" width="1" height="12" fill="#dfdfdf"/>
<rect x="915" y="377" width="1" height="12" fill="#dfdfdf"/>
<rect x="960" y="377" width="1" height="12" fill="#dfdfdf"/>
<rect x="974" y="377" width="1" height="12" fill="#dfdfdf"/>
<rect x="987" y="377" width="1" height="12" fill="#dfdfdf"/>
<rect x="1001" y="377" width="1" height="12" fill="#dfdfdf"/>
<rect x="32" y="389" width="1" height="12" fill="#dfdfdf"/>
<rect x="318" y="389" width="1" height="12" fill="#dfdfdf"/>
<rect x="339" y="389" width="1" height="12" fill="#dfdfdf"/>
<rect x="351" y="389" width="1" height="12" fill="#dfdfdf"/>
<rect x="364" y="389" width="1" height="12" fill="#dfdfdf"/>
<rect x="441" y="389" width="1" height="12" fill="#dfdfdf"/>
<rect x="486" y="389" width="1" height="12" fill="#dfdfdf"/>
<rect x="540" y="389" width="1" height="12" fill="#dfdfdf"/>
<rect x="593" y="389" width="1" height="12" fill="#dfdfdf"/>
<rect x="628" y="389" width="1" height="12" fill="#dfdfdf"/>
<rect x="642" y="389" width="1" height="12" fill="#dfdfdf"/>
<rect x="680" y="389" width="1" height="12" fill="#dfdfdf"/>
<rect x="693" y="389" width="1" height="12" fill="#dfdfdf"/>
<rect x="743" y="389" width="1" height="12" fill="#dfdfdf"/>
<rect x="792" y="389" width="1" height="12" fill="#dfdfdf"/>
<rect x="806" y="389" width="1" height="12" fill="#dfdfdf"/>
<rect x="819" y="389" width="1" height="12" fill="#dfdfdf"/>
<rect x="857" y="389" width="1" height="12" fill="#dfdfdf"/>
<rect x="870" y="389" width="1" height="12" fill="#dfdfdf"/>
<rect x="915" y="389" width="1" height="12" fill="#dfdfdf"/>
<rect x="960" y="389" width="1" height="12" fill="#dfdfdf"/>
<rect x="974" y="389" width="1" height="12" fill="#dfdfdf"/>
<rect x="987" y="389" width="1" height="12" fill="#dfdfdf"/>
<rect x="1001" y="389" width="1" height="12" fill="#dfdfdf"/>
<rect x="32" y="401" width="1" height="12" fill="#dfdfdf"/>
<rect x="318" y="401" width="1" height="12" fill="#dfdfdf"/>
<rect x="339" y="401" width="1" height="12" fill="#dfdfdf"/>
<rect x="351" y="401" width="1" height="12" fill="#dfdfdf"/>
<rect x="364" y="401" width="1" height="12" fill="#dfdfdf"/>
<rect x="441" y="401" width="1" height="12" fill="#dfdfdf"/>
<rect x="486" y="401" width="1" height="12" fill="#dfdfdf"/>
<rect x="540" y="401" width="1" height="12" fill="#dfdfdf"/>
<rect x="593" y="401" width="1" height="12" fill="#dfdfdf"/>
<rect x="628" y="401" width="1" height="12" fill="#dfdfdf"/>
<rect x="642" y="401" width="1" height="12" fill="#dfdfdf"/>
<rect x="680" y="401" width="1" height="12" fill="#dfdfdf"/>
<rect x="693" y="401" width="1" height="12" fill="#dfdfdf"/>
<rect x="743" y="401" width="1" height="12" fill="#dfdfdf"/>
<rect x="792" y="401" width="1" height="12" fill="#dfdfdf"/>
<rect x="806" y="401" width="1" height="12" fill="#dfdfdf"/>
<rect x="819" y="401" width="1" height="12" fill="#dfdfdf"/>
<rect x="857" y="401" width="1" height="12" fill="#dfdfdf"/>
<rect x="870" y="401" width="1" height="12" fill="#dfdfdf"/>
<rect x="915" y="401" width="1" height="12" fill="#dfdfdf"/>
<rect x="960" y="401" width="1" height="12" fill="#dfdfdf"/>
<rect x="974" y="401" width="1" height="12" fill="#dfdfdf"/>
<rect x="987" y="401" width="1" height="12" fill="#dfdfdf"/>
<rect x="1001" y="401" width="1" height="12" fill="#dfdfdf"/>
<rect x="32" y="413" width="1" height="12" fill="#dfdfdf"/>
<rect x="318" y="413" width="1" height="12" fill="#dfdfdf"/>
<rect x="339" y="413" width="1" height="12" fill="#dfdfdf"/>
<rect x="351" y="413" width="1" height="12" fill="#dfdfdf"/>
<rect x="364" y="413" width="1" height="12" fill="#dfdfdf"/>
<rect x="441" y="413" width="1" height="12" fill="#dfdfdf"/>
<rect x="486" y="413" width="1" height="12" fill="#dfdfdf"/>
<rect x="540" y="413" width="1" height="12" fill="#dfdfdf"/>
<rect x="593" y="413" width="1" height="12" fill="#dfdfdf"/>
<rect x="628" y="413" width="1" height="12" fill="#dfdfdf"/>
<rect x="642" y="413" width="1" height="12" fill="#dfdfdf"/>
<rect x="680" y="413" width="1" height="12" fill="#dfdfdf"/>
<rect x="693" y="413" width="1" height="12" fill="#dfdfdf"/>
<rect x="743" y="413" width="1" height="12" fill="#dfdfdf"/>
<rect x="792" y="413" width="1" height="12" fill="#dfdfdf"/>
<rect x="806" y="413" width="1" height="12" fill="#dfdfdf"/>
<rect x="819" y="413" width="1" height="12" fill="#dfdfdf"/>
<rect x="857" y="413" width="1" height="12" fill="#dfdfdf"/>
<rect x="870" y="413" width="1" height="12" fill="#dfdfdf"/>
<rect x="915" y="413" width="1" height="12" fill="#dfdfdf"/>
<rect x="960" y="413" width="1" height="12" fill="#dfdfdf"/>
<rect x="974" y="413" width="1" height="12" fill="#dfdfdf"/>
<rect x="987" y="413" width="1" height="12" fill="#dfdfdf"/>
<rect x="1001" y="413" width="1" height="12" fill="#dfdfdf"/>
<rect x="32" y="425" width="1" height="12" fill="#dfdfdf"/>
<rect x="318" y="425" width="1" height="12" fill="#dfdfdf"/>
<rect x="339" y="425" width="1" height="12" fill="#dfdfdf"/>
<rect x="351" y="425" width="1" height="12" fill="#dfdfdf"/>
<rect x="364" y="425" width="1" height="12" fill="#dfdfdf"/>
<rect x="441" y="425" width="1" height="12" fill="#dfdfdf"/>
<rect x="486" y="425" width="1" height="12" fill="#dfdfdf"/>
<rect x="540" y="425" width="1" height="12" fill="#dfdfdf"/>
<rect x="593" y="425" width="1" height="12" fill="#dfdfdf"/>
<rect x="628" y="425" width="1" height="12" fill="#dfdfdf"/>
<rect x="642" y="425" width="1" height="12" fill="#dfdfdf"/>
<rect x="680" y="425" width="1" height="12" fill="#dfdfdf"/>
<rect x="693" y="425" width="1" height="12" fill="#dfdfdf"/>
<rect x="743" y="425" width="1" height="12" fill="#dfdfdf"/>
<rect x="792" y="425" width="1" height="12" fill="#dfdfdf"/>
<rect x="806" y="425" width="1" height="12" fill="#dfdfdf"/>
<rect x="819" y="425" width="1" height="12" fill="#dfdfdf"/>
<rect x="857" y="425" width="1" height="12" fill="#dfdfdf"/>
<rect x="870" y="425" width="1" height="12" fill="#dfdfdf"/>
<rect x="915" y="425" width="1" height="12" fill="#dfdfdf"/>
<rect x="960" y="425" width="1" height="12" fill="#dfdfdf"/>
<rect x="974" y="425" width="1" height="12" fill="#dfdfdf"/>
<rect x="987" y="425" width="1" height="12" fill="#dfdfdf"/>
<rect x="1001" y="425" width="1" height="12" fill="#dfdfdf"/>
<rect x="32" y="437" width="1" height="12" fill="#dfdfdf"/>
<rect x="318" y="437" width="1" height="12" fill="#dfdfdf"/>
<rect x="339" y="437" width="1" height="12" fill="#dfdfdf"/>
<rect x="351" y="437" width="1" height="12" fill="#dfdfdf"/>
<rect x="364" y="437" width="1" height="12" fill="#dfdfdf"/>
<rect x="441" y="437" width="1" height="12" fill="#dfdfdf"/>
<rect x="486" y="437" width="1" height="12" fill="#dfdfdf"/>
<rect x="540" y="437" width="1" height="12" fill="#dfdfdf"/>
<rect x="593" y="437" width="1" height="12" fill="#dfdfdf"/>
<rect x="628" y="437" width="1" height="12" fill="#dfdfdf"/>
<rect x="642" y="437" width="1" height="12" fill="#dfdfdf"/>
<rect x="680" y="437" width="1" height="12" fill="#dfdfdf"/>
<rect x="693" y="437" width="1" height="12" fill="#dfdfdf"/>
<rect x="743" y="437" width="1" height="12" fill="#dfdfdf"/>
<rect x="792" y="437" width="1" height="12" fill="#dfdfdf"/>
<rect x="806" y="437" width="1" height="12" fill="#dfdfdf"/>
<rect x="819" y="437" width="1" height="12" fill="#dfdfdf"/>
<rect x="857" y="437" width="1" height="12" fill="#dfdfdf"/>
<rect x="870" y="437" width="1" height="12" fill="#dfdfdf"/>
<rect x="915" y="437" width="1" height="12" fill="#dfdfdf"/>
<rect x="960" y="437" width="1" height="12" fill="#dfdfdf"/>
<rect x="974" y="437" width="1" height="12" fill="#dfdfdf"/>
<rect x="987" y="437" width="1" height="12" fill="#dfdfdf"/>
<rect x="1001" y="437" width="1" height="12" fill="#dfdfdf"/>
<rect x="32" y="449" width="1" height="12" fill="#dfdfdf"/>
<rect x="248" y="449" width="1" height="12" fill="#dfdfdf"/>
<rect x="318" y="449" width="1" height="12" fill="#dfdfdf"/>
<rect x="339" y="449" width="1" height="12" fill="#dfdfdf"/>
<rect x="351" y="449" width="1" height="12" fill="#dfdfdf"/>
<rect x="364" y="449" width="1" height="12" fill="#dfdfdf"/>
<rect x="441" y="449" width="1" height="12" fill="#dfdfdf"/>
<rect x="486" y="449" width="1" height="12" fill="#dfdfdf"/>
<rect x="540" y="449" width="1" height="12" fill="#dfdfdf"/>
<rect x="593" y="449" width="1" height="12" fill="#dfdfdf"/>
<rect x="628" y="449" width="1" height="12" fill="#dfdfdf"/>
<rect x="642" y="449" width="1" height="12" fill="#dfdfdf"/>
<rect x="680" y="449" width="1" height="12" fill="#dfdfdf"/>
<rect x="693" y="449" width="1" height="12" fill="#dfdfdf"/>
<rect x="743" y="449" width="1" height="12" fill="#dfdfdf"/>
<rect x="792" y="449" width="1" height="12" fill="#dfdfdf"/>
<rect x="806" y="449" width="1" height="12" fill="#dfdfdf"/>
<rect x="819" y="449" width="1" height="12" fill="#dfdfdf"/>
<rect x="857" y="449" width="1" height="12" fill="#dfdfdf"/>
<rect x="870" y="449" width="1" height="12" fill="#dfdfdf"/>
<rect x="915" y="449" width="1" height="12" fill="#dfdfdf"/>
<rect x="960" y="449" width="1" height="12" fill="#dfdfdf"/>
<rect x="974" y="449" width="1" height="12" fill="#dfdfdf"/>
<rect x="987" y="449" width="1" height="12" fill="#dfdfdf"/>
<rect x="1001" y="449" width="1" height="12" fill="#dfdfdf"/>
<rect x="32" y="461" width="1" height="12" fill="#dfdfdf"/>
<rect x="248" y="461" width="1" height="12" fill="#dfdfdf"/>
<rect x="318" y="461" width="1" height="12" fill="#dfdfdf"/>
<rect x="339" y="461" width="1" height="12" fill="#dfdfdf"/>
<rect x="351" y="461" width="1" height="12" fill="#dfdfdf"/>
<rect x="364" y="461" width="1" height="12" fill="#dfdfdf"/>
<rect x="441" y="461" width="1" height="12" fill="#dfdfdf"/>
<rect x="486" y="461" width="1" height="12" fill="#dfdfdf"/>
<rect x="540" y="461" width="1" height="12" fill="#dfdfdf"/>
<rect x="593" y="461" width="1" height="12" fill="#dfdfdf"/>
<rect x="628" y="461" width="1" height="12" fill="#dfdfdf"/>
<rect x="642" y="461" width="1" height="12" fill="#dfdfdf"/>
<rect x="680" y="461" width="1" height="12" fill="#dfdfdf"/>
<rect x="693" y="461" width="1" height="12" fill="#dfdfdf"/>
<rect x="743" y="461" width="1" height="12" fill="#dfdfdf"/>
<rect x="792" y="461" width="1" height="12" fill="#dfdfdf"/>
<rect x="806" y="461" width="1" height="12" fill="#dfdfdf"/>
<rect x="819" y="461" width="1" height="12" fill="#dfdfdf"/>
<rect x="857" y="461" width="1" height="12" fill="#dfdfdf"/>
<rect x="870" y="461" width="1" height="12" fill="#dfdfdf"/>
<rect x="915" y="461" width="1" height="12" fill="#dfdfdf"/>
<rect x="960" y="461" width="1" height="12" fill="#dfdfdf"/>
<rect x="974" y="461" width="1" height="12" fill="#dfdfdf"/>
<rect x="987" y="461" width="1" height="12" fill="#dfdfdf"/>
<rect x="1001" y="461" width="1" height="12" fill="#dfdfdf"/>
<rect x="32" y="473" width="1" height="12" fill="#dfdfdf"/>
<rect x="318" y="473" width="1" height="12" fill="#dfdfdf"/>
<rect x="339" y="473" width="1" height="12" fill="#dfdfdf"/>
<rect x="351" y="473" width="1" height="12" fill="#dfdfdf"/>
<rect x="364" y="473" width="1" height="12" fill="#dfdfdf"/>
<rect x="441" y="473" width="1" height="12" fill="#dfdfdf"/>
<rect x="486" y="473" width="1" height="12" fill="#dfdfdf"/>
<rect x="540" y="473" width="1" height="12" fill="#dfdfdf"/>
<rect x="593" y="473" width="1" height="12" fill="#dfdfdf"/>
<rect x="628" y="473" width="1" height="12" fill="#dfdfdf"/>
<rect x="642" y="473" width="1" height="12" fill="#dfdfdf"/>
<rect x="680" y="473" width="1" height="12" fill="#dfdfdf"/>
<rect x="693" y="473" width="1" height="12" fill="#dfdfdf"/>
<rect x="743" y="473" width="1" height="12" fill="#dfdfdf"/>
<rect x="792" y="473" width="1" height="12" fill="#dfdfdf"/>
<rect x="806" y="473" width="1" height="12" fill="#dfdfdf"/>
<rect x="819" y="473" width="1" height="12" fill="#dfdfdf"/>
<rect x="857" y="473" width="1" height="12" fill="#dfdfdf"/>
<rect x="870" y="473" width="1" height="12" fill="#dfdfdf"/>
<rect x="915" y="473" width="1" height="12" fill="#dfdfdf"/>
<rect x="960" y="473" width="1" height="12" fill="#dfdfdf"/>
<rect x="974" y="473" width="1" height="12" fill="#dfdfdf"/>
<rect x="987" y="473" width="1" height="12" fill="#dfdfdf"/>
<rect x="1001" y="473" width="1" height="12" fill="#dfdfdf"/>
<rect x="32" y="485" width="1" height="12" fill="#dfdfdf"/>
<rect x="248" y="485" width="1" height="12" fill="#dfdfdf"/>
<rect x="318" y="485" width="1" height="12" fill="#dfdfdf"/>
<rect x="339" y="485" width="1" height="12" fill="#dfdfdf"/>
<rect x="351" y="485" width="1" height="12" fill="#dfdfdf"/>
<rect x="364" y="485" width="1" height="12" fill="#dfdfdf"/>
<rect x="441" y="485" width="1" height="12" fill="#dfdfdf"/>
<rect x="486" y="485" width="1" height="12" fill="#dfdfdf"/>
<rect x="540" y="485" width="1" height="12" fill="#dfdfdf"/>
<rect x="593" y="485" width="1" height="12" fill="#dfdfdf"/>
<rect x="628" y="485" width="1" height="12" fill="#dfdfdf"/>
<rect x="642" y="485" width="1" height="12" fill="#dfdfdf"/>
<rect x="680" y="485" width="1" height="12" fill="#dfdfdf"/>
<rect x="693" y="485" width="1" height="12" fill="#dfdfdf"/>
<rect x="743" y="485" width="1" height="12" fill="#dfdfdf"/>
<rect x="792" y="485" width="1" height="12" fill="#dfdfdf"/>
<rect x="806" y="485" width="1" height="12" fill="#dfdfdf"/>
<rect x="819" y="485" width="1" height="12" fill="#dfdfdf"/>
<rect x="857" y="485" width="1" height="12" fill="#dfdfdf"/>
<rect x="870" y="485" width="1" height="12" fill="#dfdfdf"/>
<rect x="915" y="485" width="1" height="12" fill="#dfdfdf"/>
<rect x="960" y="485" width="1" height="12" fill="#dfdfdf"/>
<rect x="974" y="485" width="1" height="12" fill="#dfdfdf"/>
<rect x="987" y="485" width="1" height="12" fill="#dfdfdf"/>
<rect x="1001" y="485" width="1" height="12" fill="#dfdfdf"/>
<rect x="32" y="497" width="1" height="12" fill="#dfdfdf"/>
<rect x="318" y="497" width="1" height="12" fill="#dfdfdf"/>
<rect x="339" y="497" width="1" height="12" fill="#dfdfdf"/>
<rect x="351" y="497" width="1" height="12" fill="#dfdfdf"/>
<rect x="364" y="497" width="1" height="12" fill="#dfdfdf"/>
<rect x="441" y="497" width="1" height="12" fill="#dfdfdf"/>
<rect x="486" y="497" width="1" height="12" fill="#dfdfdf"/>
<rect x="540" y="497" width="1" height="12" fill="#dfdfdf"/>
<rect x="593" y="497" width="1" height="12" fill="#dfdfdf"/>
<rect x="628" y="497" width="1" height="12" fill="#dfdfdf"/>
<rect x="642" y="497" width="1" height="12" fill="#dfdfdf"/>
<rect x="680" y="497" width="1" height="12" fill="#dfdfdf"/>
<rect x="693" y="497" width="1" height="12" fill="#dfdfdf"/>
<rect x="743" y="497" width="1" height="12" fill="#dfdfdf"/>
<rect x="792" y="497" width="1" height="12" fill="#dfdfdf"/>
<rect x="806" y="497" width="1" height="12" fill="#dfdfdf"/>
<rect x="819" y="497" width="1" height="12" fill="#dfdfdf"/>
<rect x="857" y="497" width="1" height="12" fill="#dfdfdf"/>
<rect x="870" y="497" width="1" height="12" fill="#dfdfdf"/>
<rect x="915" y="497" width="1" height="12" fill="#dfdfdf"/>
<rect x="960" y="497" width="1" height="12" fill="#dfdfdf"/>
<rect x="974" y="497" width="1" height="12" fill="#dfdfdf"/>
<rect x="987" y="497" width="1" height="12" fill="#dfdfdf"/>
<rect x="1001" y="497" width="1" height="12" fill="#dfdfdf"/>
<rect x="1007" y="197" width="1" height="312" fill="#c6c6c6"/>
<rect x="1008" y="185" width="16" height="324" fill="#e6e6e6" />
<rect x="1009.5" y="185" width="13" height="324" fill="#dadada" />
<rect x="1010.5" y="187.5" width="11" height="11" fill="#ffffff" stroke="#c6c6c6" stroke-width="1" />
<path d="M1013.5 194 L1016 191.5 L1018.5 194 Z" fill="#666" />
<rect x="1010.5" y="198.5" width="11" height="73" fill="#ffffff" stroke="#c6c6c6" stroke-width="1" />
<rect x="1010.5" y="497.5" width="11" height="11" fill="#ffffff" stroke="#c6c6c6" stroke-width="1" />
<path d="M1013.5 501.5 L1016 504 L1018.5 501.5 Z" fill="#666" />
<text x="70.8" y="206" font-size="9.6" fill="#111111" font-weight="bold" textLength="194.5" lengthAdjust="spacingAndGlyphs" >Module 3 Assignment 1 Excel Workbook Assignment</text>
<text x="149.7" y="218" font-size="9.6" fill="#111111" font-weight="bold" textLength="36.2" lengthAdjust="spacingAndGlyphs" >MFE 6100</text>
<text x="18.75" y="242" font-size="9.6" fill="#111111" font-weight="bold" font-style="italic" textLength="24.6" lengthAdjust="spacingAndGlyphs" >Part A:</text>
<rect x="18.5" y="243" width="25.0" height="1" fill="#222"/>
<text x="18.75" y="254" font-size="9.6" fill="#111111" font-weight="bold" textLength="272.65" lengthAdjust="spacingAndGlyphs" >Been Carded, Ltd., is a purveyor of woolen goods and is known for its high</text>
<text x="18.75" y="266" font-size="9.6" fill="#111111" font-weight="bold" textLength="276.85" lengthAdjust="spacingAndGlyphs" >quality merchandise. The business started up in January 2012 and has been</text>
<text x="18.75" y="278" font-size="9.6" fill="#111111" font-weight="bold" textLength="271.85" lengthAdjust="spacingAndGlyphs" >quite successful. Complete the Journal Entries for all 2016 transaction and</text>
<text x="18.75" y="290" font-size="9.6" fill="#111111" font-weight="bold" textLength="273.75" lengthAdjust="spacingAndGlyphs" >adjustment information listed below. You do not have to date your journal</text>
<text x="18.75" y="302" font-size="9.6" fill="#111111" font-weight="bold" textLength="289.85" lengthAdjust="spacingAndGlyphs" >entries.  The first journal entry has been completed for you (15 points—graded</text>
<text x="18.75" y="314" font-size="9.6" fill="#111111" font-weight="bold" textLength="219.55" lengthAdjust="spacingAndGlyphs" >for accuracy and format, including Excel spreadsheet links).</text>
<text x="19.3" y="338" font-size="9.6" fill="#111111" font-weight="bold" textLength="125.2" lengthAdjust="spacingAndGlyphs" >Transaction and Adjustment Data:</text>
<text x="30.8" y="350" font-size="9.6" fill="#222" text-anchor="end" >1</text>
<text x="34.9" y="350" font-size="9.6" fill="#222" textLength="201.1" lengthAdjust="spacingAndGlyphs" >Paid the $8,377 in salaries owed at year end 2015.</text>
<text x="30.8" y="362" font-size="9.6" fill="#222" text-anchor="end" >2</text>
<text x="34.9" y="362" font-size="9.6" fill="#222" textLength="300.3" lengthAdjust="spacingAndGlyphs" >Collected the $22,805 of accounts receivable due to them at year end 2015.</text>
<text x="30.8" y="374" font-size="9.6" fill="#222" text-anchor="end" >3</text>
<text x="34.9" y="374" font-size="9.6" fill="#222" textLength="210.4" lengthAdjust="spacingAndGlyphs" >Paid the $381,796 owed on account at year end 2015.</text>
<text x="30.8" y="386" font-size="9.6" fill="#222" text-anchor="end" >4</text>
<text x="34.9" y="386" font-size="9.6" fill="#222" textLength="256.1" lengthAdjust="spacingAndGlyphs" >Purchased additional Furniture &amp; Equipment on January 2, 2016</text>
<text x="34.9" y="398" font-size="9.6" fill="#222" textLength="278.8" lengthAdjust="spacingAndGlyphs" >costing $76,000 due to increased shipping activities for their growing</text>
<text x="30.8" y="410" font-size="9.6" fill="#222" text-anchor="end" >5</text>
<text x="34.9" y="410" font-size="9.6" fill="#222" textLength="275.6" lengthAdjust="spacingAndGlyphs" >Paid $2,940 to renew their annual insurance policy on March 1, 2016.</text>
<text x="30.8" y="422" font-size="9.6" fill="#222" text-anchor="end" >6</text>
<text x="34.9" y="422" font-size="9.6" fill="#222" textLength="259.20000000000005" lengthAdjust="spacingAndGlyphs" >Purchased a new computerized sales system on April 1, 2016 for</text>
<text x="34.9" y="434" font-size="9.6" fill="#222" textLength="279.6" lengthAdjust="spacingAndGlyphs" >$72,000. The system has a useful economic life of 3 years and will be</text>
<text x="34.9" y="446" font-size="9.6" fill="#222" textLength="278.20000000000005" lengthAdjust="spacingAndGlyphs" >depreciated monthly using the straight line method. The system has</text>
<text x="30.8" y="458" font-size="9.6" fill="#222" text-anchor="end" >7</text>
<text x="34.9" y="458" font-size="9.6" fill="#222" textLength="203.4" lengthAdjust="spacingAndGlyphs" >Made a payment on the long-term note of $92,000.</text>
<text x="30.8" y="470" font-size="9.6" fill="#222" text-anchor="end" >8</text>
<text x="34.9" y="470" font-size="9.6" fill="#222" textLength="201.1" lengthAdjust="spacingAndGlyphs" >Made a payment on the mortgage note of $16,800.</text>
<text x="30.8" y="482" font-size="9.6" fill="#222" text-anchor="end" >9</text>
<text x="34.9" y="482" font-size="9.6" fill="#222" textLength="252.20000000000002" lengthAdjust="spacingAndGlyphs" >Paid the interest of $17,257 that was payable at year end 2015.</text>
<text x="30.8" y="494" font-size="9.6" fill="#222" text-anchor="end" >10</text>
<text x="34.9" y="494" font-size="9.6" fill="#222" textLength="198.1" lengthAdjust="spacingAndGlyphs" >Paid the taxes owed of $109,670 at year end 2015.</text>
<text x="30.8" y="506" font-size="9.6" fill="#222" text-anchor="end" >11</text>
<text x="34.9" y="506" font-size="9.6" fill="#222" textLength="261.20000000000005" lengthAdjust="spacingAndGlyphs" >Sales of woolen goods for 2016 were $2,542,690. At December 31,</text>
<text x="341.2" y="230" font-size="9.6" fill="#111111" font-weight="bold" textLength="32" lengthAdjust="spacingAndGlyphs" >Solution:</text>
<text x="341.2" y="254" font-size="9.6" fill="#3a3a3a" font-weight="bold" textLength="55.9" lengthAdjust="spacingAndGlyphs" >Journal Entries:</text>
<rect x="341" y="254" width="56.5" height="1" fill="#444"/>
<text x="349.4" y="266" font-size="9.6" fill="#7f4fb3" text-anchor="end" >1</text>
<text x="353.1" y="266" font-size="9.6" fill="#7f4fb3" textLength="67.9" lengthAdjust="spacingAndGlyphs" >Salaries Payable</text>
<text x="366.5" y="278" font-size="9.6" fill="#7f4fb3" textLength="18.8" lengthAdjust="spacingAndGlyphs" >Cash</text>
<text x="504" y="252.5" font-size="9.6" fill="#333" font-weight="bold" textLength="20" lengthAdjust="spacingAndGlyphs" >Debit</text>
<text x="556.2" y="252.5" font-size="9.6" fill="#333" font-weight="bold" textLength="21.7" lengthAdjust="spacingAndGlyphs" >Credit</text>
<rect x="492" y="255" width="43.5" height="1" fill="#333"/>
<rect x="545" y="255" width="43.5" height="1" fill="#333"/>
<text x="515.7" y="265.5" font-size="9.6" fill="#7f4fb3" textLength="20" lengthAdjust="spacingAndGlyphs" >8,377</text>
<text x="569" y="277.5" font-size="9.6" fill="#7f4fb3" textLength="20" lengthAdjust="spacingAndGlyphs" >8,377</text>
<rect x="0" y="509" width="1024" height="21" fill="#e6e6e6" />
<rect x="0" y="508" width="75" height="1" fill="#c6c6c6"/>
<rect x="197" y="508" width="811" height="1" fill="#c6c6c6"/>
<path d="M23 516 L20 518.6 L23 521.2 Z" fill="#bdbdbd" />
<path d="M42 516 L45 518.6 L42 521.2 Z" fill="#bdbdbd" />
<rect x="75" y="508" width="121.5" height="19" fill="#ffffff" />
<rect x="75" y="509" width="1" height="18" fill="#c6c6c6"/>
<rect x="196" y="509" width="1" height="18" fill="#c6c6c6"/>
<rect x="75" y="526" width="122" height="1" fill="#217346"/>
<rect x="75" y="525" width="122" height="1" fill="#217346" opacity="0.5"/>
<text x="84.4" y="522" font-size="10" fill="#217346" font-weight="bold" textLength="102.7" lengthAdjust="spacingAndGlyphs" >Part A; Journal Entries</text>
<text x="209.1" y="522" font-size="10" fill="#444" textLength="91.3" lengthAdjust="spacingAndGlyphs" >Parts B,C; T-Accounts</text>
<rect x="313" y="511.5" width="1" height="15.0" fill="#b5b5b5"/>
<text x="326.7" y="522" font-size="10" fill="#444" textLength="102.5" lengthAdjust="spacingAndGlyphs" >Parts D,F; Trial Balances</text>
<rect x="443.5" y="511.5" width="1" height="15.0" fill="#b5b5b5"/>
<text x="455.6" y="522" font-size="10" fill="#444" textLength="87" lengthAdjust="spacingAndGlyphs" >Part E; Closing Entry</text>
<rect x="555" y="511.5" width="1" height="15.0" fill="#b5b5b5"/>
<circle cx="586" cy="519" r="5.3" fill="none" stroke="#666" stroke-width="1"/>
<path d="M583 519 H589 M586 516 V522" fill="none" stroke="#666" stroke-width="1.2" />
<rect x="614" y="515.5" width="1" height="1.2" fill="#aaa" />
<rect x="614" y="518.5" width="1" height="1.2" fill="#aaa" />
<rect x="614" y="521.5" width="1" height="1.2" fill="#aaa" />
<rect x="637" y="513.5" width="372" height="11" fill="#dadada" />
<rect x="627.5" y="513.5" width="10.5" height="11" fill="#ffffff" stroke="#c6c6c6" stroke-width="1" />
<path d="M631 519 L634 516.5 V521.5 Z" fill="#666" />
<rect x="638" y="513.5" width="225.5" height="11" fill="#ffffff" stroke="#c6c6c6" stroke-width="1" />
<rect x="998.5" y="514.5" width="10.5" height="10" fill="#ffffff" stroke="#c6c6c6" stroke-width="1" />
<path d="M1005.5 519.5 L1002.5 517 V522 Z" fill="#666" />
<rect x="0" y="530" width="1024" height="16" fill="#f3f2f1" />
<rect x="0" y="529" width="1024" height="1" fill="#dadada"/>
<rect x="810" y="530" width="28" height="16" fill="#d2d0ce" />
<path d="M11 533.5 H15.3 V541.5 H7.3 V537.5" fill="none" stroke="#555" stroke-width="1.1" />
<rect x="11" y="533" width="4.5" height="1.5" fill="#555"/>
<circle cx="8" cy="534.4" r="2.2" fill="#555"/>
<rect x="8.5" y="537.5" width="1" height="1" fill="#777" />
<rect x="8.5" y="540" width="1" height="1" fill="#777" />
<rect x="10.7" y="537.5" width="1" height="1" fill="#777" />
<rect x="10.7" y="540" width="1" height="1" fill="#777" />
<rect x="12.9" y="537.5" width="1" height="1" fill="#777" />
<rect x="12.9" y="540" width="1" height="1" fill="#777" />
<rect x="820" y="533" width="9" height="9" fill="none" stroke="#8a8a8a" stroke-width="0.8" />
<path d="M823 533 V542 M826 533 V542 M820 536 H829 M820 539 H829" fill="none" stroke="#8a8a8a" stroke-width="0.7" />
<rect x="847.5" y="533.5" width="10" height="8.5" fill="none" stroke="#666" stroke-width="1" />
<rect x="850" y="536" width="5" height="4" fill="none" stroke="#666" stroke-width="0.8" />
<path d="M875.5 533.5 H885.5 V541.5 H875.5 Z M875.5 538.5 H879 M878.5 533.5 V538.5 M882 533.5 V536" fill="none" stroke="#888" stroke-width="0.9" />
<rect x="899" y="537" width="5" height="1" fill="#555"/>
<rect x="907" y="537" width="74" height="1" fill="#bbb"/>
<rect x="934" y="533" width="4" height="9" fill="#777" />
<rect x="944" y="535.5" width="1" height="4.0" fill="#bbb"/>
<path d="M983.5 537.5 H989.5 M986.5 534.5 V540.5" fill="none" stroke="#555" stroke-width="1.1" />
<text x="997.9" y="540.5" font-size="9" fill="#444" textLength="15.3" lengthAdjust="spacingAndGlyphs" >80%</text>
<rect x="0" y="546" width="1024" height="30" fill="#2a2d32" />
<rect x="36" y="546" width="258.5" height="30" fill="#f0f0f0" />
<rect x="36" y="546" width="258.5" height="1" fill="#c8c8c8"/>
<path d="M12 556.3 L17.5 555.6 V560.5 H12 Z M18.3 555.5 L24 554.8 V560.5 H18.3 Z M12 561.3 H17.5 V566.2 L12 565.5 Z M18.3 561.3 H24 V567 L18.3 566.3 Z" fill="#ffffff" />
<circle cx="50.8" cy="560.6" r="6.2" fill="none" stroke="#111" stroke-width="2.2"/>
<text x="66.4" y="566.1" font-size="12" fill="#3a3a3a" textLength="95.3" lengthAdjust="spacingAndGlyphs" >Type here to search</text>
<path d="M276.5 565 V557.5 C276.5 555 281 555 281 557.5 V565 Z" fill="none" stroke="#444" stroke-width="1" />
<path d="M274.5 562.5 C274.5 568 283 568 283 562.5 M278.8 566.5 V567.5 M277 567.5 H280.5" fill="none" stroke="#444" stroke-width="1" />
<path d="M305.5 556 H314 M305.5 565 H314 M307 558.5 H313 V562.5 H307 Z M316.5 557 V565 M318 557 V558" fill="none" stroke="#fff" stroke-width="1" />
<path d="M342 556 H348 L350 558 H358 V567 H342 Z" fill="#f8d775" />
<rect x="346" y="561" width="8" height="6" fill="#2f8fd8" />
<rect x="348" y="563" width="4" height="4" fill="#f8d775" />
<path d="M377.8 557 H395 V568 H377.8 Z" fill="#ffffff" />
<path d="M383 557 V555 C383 552 390 552 390 555 V557" fill="none" stroke="#ffffff" stroke-width="1.2" />
<rect x="382" y="559.5" width="4" height="3.5" fill="#f25022" />
<rect x="387" y="559.5" width="4" height="3.5" fill="#7fba00" />
<rect x="382" y="564" width="4" height="3.5" fill="#00a4ef" />
<rect x="387" y="564" width="4" height="3.5" fill="#ffb900" />
<path d="M430.5 562 H419.5 C420 566 426 567.5 430 565.5 V568 C424 570 416 568 416 561 C416 554 423 552 426 553 C430 554 431.5 558 430.5 562 Z M420 559 H426.5 C426 556 421 556 420 559 Z" fill="#1e90e8" />
<rect x="408.6" y="574" width="30.5" height="2" fill="#76b9ed" />
<circle cx="460.3" cy="560.8" r="8.3" fill="#db4437"/>
<path d="M460.3 560.8 L467.5 565 A8.3 8.3 0 0 1 453.1 565 Z" fill="#0f9d58" />
<path d="M460.3 560.8 L460.3 552.5 A8.3 8.3 0 0 1 467.5 565 Z" fill="#f4c20d" />
<circle cx="460.3" cy="560.8" r="4" fill="#ffffff"/>
<circle cx="460.3" cy="560.8" r="3" fill="#4285f4"/>
<path d="M487.5 559 L497 553.5 L506.5 559 V567.5 H487.5 Z" fill="#ffffff" />
<path d="M487.5 559 L497 564 L506.5 559" fill="none" stroke="#2a2d32" stroke-width="1.2" />
<rect x="516.4" y="546" width="36" height="30" fill="#3c4044" />
<rect x="516.4" y="574" width="36" height="2" fill="#76b9ed" />
<rect x="531" y="554" width="11" height="14" fill="#ffffff" />
<path d="M533 556 H541 M533 559 H541 M533 562 H541 M533 565 H541 M537 555 V567" fill="none" stroke="#1d6f42" stroke-width="0.8" />
<rect x="524.5" y="553" width="10" height="16" fill="#1d6f42" />
<text x="526.3" y="565" font-size="8" fill="#fff" font-weight="bold" >X</text>
<circle cx="767.3" cy="561.2" r="7.5" fill="#ffffff"/>
<circle cx="767.3" cy="561.2" r="6.2" fill="#1e90e8"/>
<text x="767.3" y="565.5" font-size="11" fill="#fff" font-weight="bold" text-anchor="middle" >?</text>
<circle cx="773" cy="566" r="3" fill="#f0a30a" stroke="#2a2d32" stroke-width="0.8"/>
<circle cx="801" cy="558.5" r="2" fill="none" stroke="#fff" stroke-width="0.9"/>
<circle cx="796.5" cy="561" r="2" fill="none" stroke="#fff" stroke-width="0.9"/>
<path d="M793 566.5 C793 563.5 800 563.5 800 566.5 M798 562.5 C799 561 804 561 804.5 564" fill="none" stroke="#fff" stroke-width="0.9" />
<path d="M824 563.5 L828.3 559 L832.6 563.5" fill="none" stroke="#fff" stroke-width="1.1" />
<path d="M846 565 H857.5 C860 565 860 560.5 857 560.5 C856 557.5 852 557 850.5 559.5 C848 559 846.5 560.5 847 562 C845 562.3 845 565 846 565 Z" fill="#fff" />
<path d="M872.5 557 L875 558.8 L872.5 560.5 L870 558.8 Z M877.5 557 L880 558.8 L877.5 560.5 L875 558.8 Z M872.5 560.5 L875 562.2 L872.5 564 L870 562.2 Z M877.5 560.5 L880 562.2 L877.5 564 L875 562.2 Z M872.5 564.8 L875 566.5 L877.5 564.8" fill="#fff" />
<path d="M894.5 559.5 H897 L900 556.5 V566.5 L897 563.5 H894.5 Z" fill="none" stroke="#fff" stroke-width="0.9" />
<path d="M901.5 559 C902.7 560.5 902.7 562 901.5 563.5 M903.5 557.5 C905.5 559.5 905.5 563 903.5 565 M905.3 556 C908 558.5 908 564 905.3 566.5" fill="none" stroke="#fff" stroke-width="0.9" />
<rect x="919.5" y="559" width="9" height="5.5" fill="none" stroke="#fff" stroke-width="1" />
<rect x="921" y="560.5" width="4.5" height="2.5" fill="#fff" />
<rect x="928.5" y="560.7" width="1.5" height="2" fill="#fff" />
<text x="950.2" y="557.3" font-size="10" fill="#fff" textLength="19.8" lengthAdjust="spacingAndGlyphs" >16:39</text>
<text x="941.3" y="571" font-size="10.2" fill="#fff" textLength="38.3" lengthAdjust="spacingAndGlyphs" >2/17/2019</text>
<path d="M993.5 555.5 H1005.5 V564.5 H1001 L998.5 567 V564.5 H993.5 Z" fill="none" stroke="#fff" stroke-width="1" />
<rect x="1020" y="546" width="1" height="30" fill="#555"/></svg></body></html>
